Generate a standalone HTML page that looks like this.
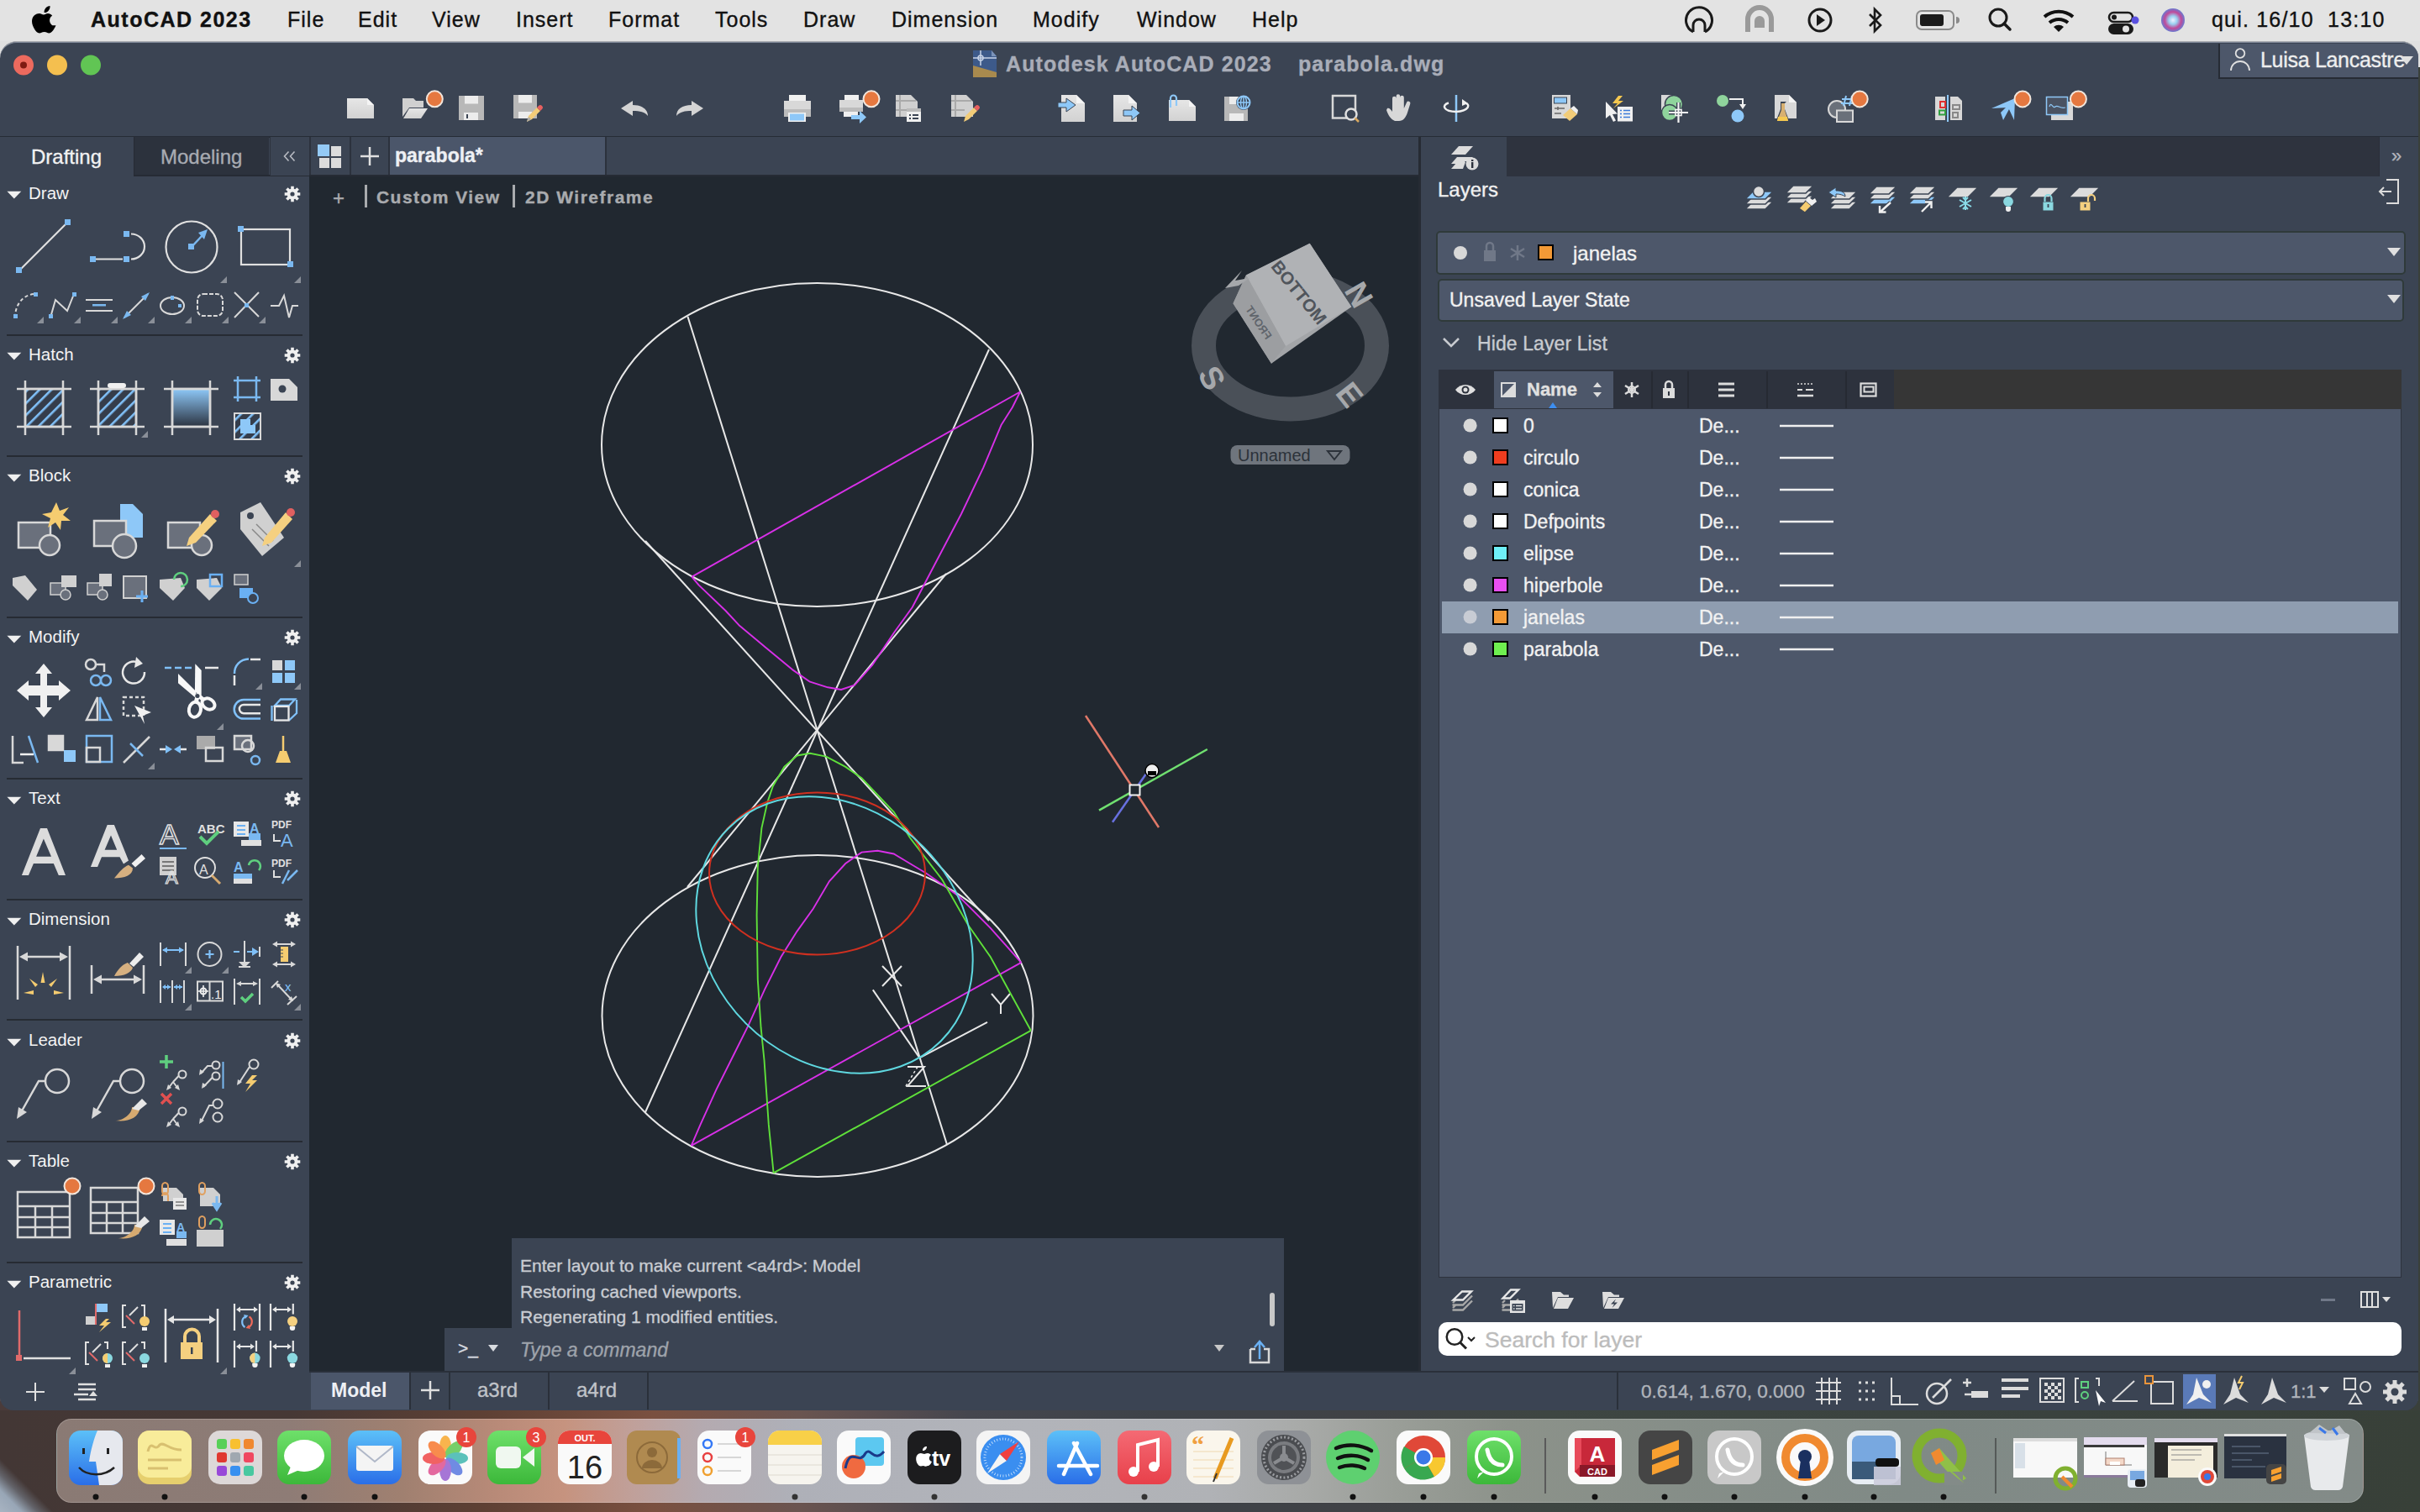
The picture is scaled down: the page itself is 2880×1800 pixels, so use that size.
<!DOCTYPE html>
<html><head><meta charset="utf-8">
<style>
*{margin:0;padding:0;box-sizing:border-box}
html,body{width:2880px;height:1800px;overflow:hidden}
body{position:relative;font-family:"Liberation Sans",sans-serif;background:#3f3a38}
.a{position:absolute}
.t{position:absolute;white-space:nowrap;line-height:1;-webkit-text-stroke:0.35px currentColor}
svg{position:absolute;overflow:visible}
#wall{left:0;top:0;width:2880px;height:1800px;background:linear-gradient(90deg,#4a3b3a 0%,#4a3d3b 30%,#5a5a5a 50%,#3d433c 80%,#3a403a 100%)}
#menubar{left:0;top:0;width:2880px;height:49px;background:#e3e3e3}
#menubar .t{font-size:25px;color:#111;top:10.5px;letter-spacing:1px}
#win{left:0;top:49px;width:2878px;height:1630px;background:#3b4453;border-radius:20px 20px 16px 16px;border-top:1px solid #a6a8ae;box-shadow:inset 0 1px 0 #7f8898;overflow:hidden}
#canvas{left:368px;top:210px;width:1322px;height:1422px;background:#212830}
#rpanel{left:1690px;top:163px;width:1188px;height:1469px;background:#3b4453}
#lpal{left:0;top:163px;width:368px;height:1516px;background:#3b4453}
#dock{left:67px;top:1688px;width:2746px;height:99px;border-radius:18px;background:linear-gradient(90deg,#8a7b74 0%,#a08a80 40%,#9a9ea0 60%,#7f8580 100%)}
.hd{font-size:20px;color:#f0f0f0}
</style></head>
<body>
<div class="a" id="wall"></div>
<div class="a" style="left:0;top:0;width:2880px;height:80px;background:#e0e0e0"></div>
<div class="a" id="menubar">
  <svg style="left:40px;top:7px" width="28" height="32" viewBox="0 0 28 32"><path d="M19.5 0c.3 2.3-.6 4.3-1.8 5.7-1.3 1.5-3.2 2.5-5.1 2.3-.3-2.1.7-4.3 1.8-5.6C15.6 1 17.7.1 19.5 0zM26.5 23.3c-.8 1.8-1.2 2.6-2.2 4.2-1.4 2.2-3.4 4.9-5.9 4.9-2.2 0-2.7-1.4-5.7-1.4-3 0-3.6 1.4-5.8 1.4-2.5 0-4.4-2.5-5.8-4.7C-2.8 21.6-3.2 14.5 1.2 11c1.6-1.3 3.6-2 5.5-2 2.1 0 3.5 1.4 5.2 1.4 1.7 0 2.7-1.4 5.2-1.4 1.8 0 3.8 1 5.1 2.7-4.5 2.5-3.8 8.9.3 11.6z" fill="#000"/></svg>
  <div class="t" style="left:108px;font-weight:bold;letter-spacing:1.5px">AutoCAD 2023</div>
  <div class="t" style="left:342px">File</div>
  <div class="t" style="left:426px">Edit</div>
  <div class="t" style="left:514px">View</div>
  <div class="t" style="left:614px">Insert</div>
  <div class="t" style="left:724px">Format</div>
  <div class="t" style="left:851px">Tools</div>
  <div class="t" style="left:956px">Draw</div>
  <div class="t" style="left:1061px">Dimension</div>
  <div class="t" style="left:1229px">Modify</div>
  <div class="t" style="left:1353px">Window</div>
  <div class="t" style="left:1490px">Help</div>
  <!-- status icons -->
  <svg style="left:2000px;top:4px" width="620" height="40" viewBox="2000 4 620 40">
    <defs><radialGradient id="siri" cx="0.5" cy="0.5" r="0.5"><stop offset="0" stop-color="#f0f0ff"/><stop offset="0.35" stop-color="#9ad0f0"/><stop offset="0.7" stop-color="#c04a9a"/><stop offset="1" stop-color="#6a7ad0"/></radialGradient></defs>
    <path d="M2015 38 A15.5 15.5 0 1 1 2029 38" fill="none" stroke="#1a1a1a" stroke-width="3"/>
    <path d="M2015 38 V30 A6.5 6.5 0 0 1 2029 30 V38" fill="none" stroke="#1a1a1a" stroke-width="3"/>
    <path d="M2080 38 V23 A14 14 0 0 1 2108 23 V38" fill="none" stroke="#9a9a9a" stroke-width="6"/>
    <path d="M2088 33 V25 A6 6 0 0 1 2100 25 V33Z" fill="#9a9a9a"/>
    <circle cx="2166" cy="24" r="13" fill="none" stroke="#1a1a1a" stroke-width="3"/><path d="M2162 17 L2172 24 L2162 31Z" fill="#1a1a1a"/>
    <path d="M2225 17 L2238 30 L2231 37 V11 L2238 18 L2225 31" fill="none" stroke="#1a1a1a" stroke-width="2.6"/>
    <rect x="2281" y="13" width="44" height="22" rx="6" fill="none" stroke="#8a8a8a" stroke-width="2"/>
    <rect x="2285" y="17" width="28" height="14" rx="3" fill="#1a1a1a"/>
    <path d="M2328 20 a4 4 0 0 1 0 8Z" fill="#8a8a8a"/>
    <circle cx="2378" cy="21" r="10" fill="none" stroke="#1a1a1a" stroke-width="3"/><path d="M2385 28 L2392 35" stroke="#1a1a1a" stroke-width="3.5" stroke-linecap="round"/>
    <path d="M2433 20 a26 26 0 0 1 34 0" fill="none" stroke="#111" stroke-width="4"/><path d="M2439 27 a17 17 0 0 1 22 0" fill="none" stroke="#111" stroke-width="4"/><path d="M2444 32 a9 9 0 0 1 12 0 L2450 38Z" fill="#111"/>
    <rect x="2510" y="15" width="28" height="11" rx="5.5" fill="none" stroke="#1a1a1a" stroke-width="2.6"/><circle cx="2516" cy="20.5" r="3" fill="#1a1a1a"/>
    <rect x="2509" y="28" width="30" height="13" rx="6.5" fill="#1a1a1a"/><circle cx="2530" cy="34.5" r="4" fill="#e3e3e3"/>
    <circle cx="2541" cy="24" r="4.5" fill="#5a50e0"/>
    <circle cx="2586" cy="24" r="14" fill="url(#siri)"/>
  </svg>
  <div class="t" style="left:2632px;letter-spacing:1.2px">qui. 16/10&nbsp; 13:10</div>
</div>
<div class="a" id="win"></div>
<!-- traffic lights -->
<svg style="left:0;top:49px" width="140" height="60" viewBox="0 49 140 60">
  <circle cx="28" cy="77.5" r="12" fill="#ec6a5e"/><circle cx="28" cy="77.5" r="4" fill="#7e1a12"/>
  <circle cx="68" cy="77.5" r="12" fill="#f4bf4f"/>
  <circle cx="108" cy="77.5" r="12" fill="#61c554"/>
</svg>
<!-- title -->
<svg style="left:1158px;top:60px" width="29" height="32" viewBox="0 0 29 32">
  <path d="M0 0 H22 L28 7 V32 H0Z" fill="#3d5a8a"/><path d="M22 0 L28 7 H22Z" fill="#7c93b8"/>
  <path d="M0 18 L28 26 V32 H0Z" fill="#a88a4e"/>
  <path d="M9 0 V18 M0 9 H28" stroke="#c8d4e8" stroke-width="1.5"/><circle cx="9" cy="9" r="3" fill="none" stroke="#c8d4e8" stroke-width="1.5"/>
</svg>
<div class="t" style="left:1197px;top:64px;font-size:25px;font-weight:bold;color:#a9adb8;letter-spacing:1.1px">Autodesk AutoCAD 2023</div>
<div class="t" style="left:1545px;top:64px;font-size:25px;font-weight:bold;color:#a9adb8;letter-spacing:1.1px">parabola.dwg</div>
<!-- user -->
<div class="a" style="left:2640px;top:52px;width:238px;height:42px;background:#4d576a;border-left:2px solid #262b34;border-bottom:2px solid #262b34;border-top-right-radius:16px"></div>
<svg style="left:2650px;top:56px" width="32" height="32" viewBox="2650 56 32 32"><circle cx="2666" cy="63.5" r="5.3" fill="none" stroke="#e0e0e0" stroke-width="1.8"/><path d="M2655 84 a11 11 0 0 1 22 0" fill="none" stroke="#e0e0e0" stroke-width="1.8"/></svg>
<div class="t" style="left:2690px;top:59px;font-size:25px;color:#eeeeee;letter-spacing:-0.3px">Luisa Lancastre</div>
<svg style="left:2855px;top:66px" width="18" height="12" viewBox="0 0 18 12"><path d="M1 1 H17 L9 11Z" fill="#e0e0e0"/></svg>
<!-- toolbar icons -->
<svg style="left:0;top:100px" width="2880" height="60" viewBox="0 100 2880 60">
 <defs>
  <linearGradient id="pg" x1="0" y1="0" x2="0" y2="1"><stop offset="0" stop-color="#e6e6e6"/><stop offset="1" stop-color="#d2d2d2"/></linearGradient>
 </defs>
 <g fill="url(#pg)">
  <!-- new -->
  <path d="M413 117 H437 L445 125 V141 H413Z"/><path d="M437 117 V125 H445Z" fill="#f4f4f4"/>
  <!-- open -->
  <path d="M479 117 H492 L495 120 H504 V128 H487 L479 139Z" fill="#d0d0d0"/><path d="M487 129 H509 L501 141 H480Z"/>
  <!-- save -->
  <path d="M546 114 H576 V143 H546Z" fill="#b8b8b8"/><rect x="553" y="114" width="16" height="9.5" fill="#ececec"/><rect x="552" y="134" width="17" height="9" fill="#ececec"/><rect x="555" y="136" width="2" height="5" fill="#3b4453"/>
  <!-- save as -->
  <path d="M611 113 H639 V141 H611Z" fill="#b8b8b8"/><rect x="617" y="113" width="16" height="9.5" fill="#ececec"/><rect x="617" y="133" width="16" height="8" fill="#ececec"/>
  <path d="M627 145 L629 138 L639 128 L643 132 L633 142Z" fill="#f2cc78"/><path d="M639 128 L641 126 a2.5 2.5 0 0 1 4 4 L643 132Z" fill="#e86060"/><path d="M627 145 L629 139 L632 142Z" fill="#aaa"/>
  <!-- undo/redo -->
  <path d="M739 129 L753 120 V125 C764 125 771 130 771 138 C767 133 761 132 753 132 V138Z" fill="#d4d4d4"/>
  <path d="M837 129 L823 120 V125 C812 125 805 130 805 138 C809 133 815 132 823 132 V138Z" fill="#d4d4d4"/>
  <!-- plot -->
  <rect x="939" y="113" width="20" height="7" fill="#f0f0f0"/><path d="M933 120 H965 V139 H933Z" fill="#d8d8d8"/><rect x="933" y="130" width="32" height="9" fill="#bcbcbc"/><rect x="938" y="134" width="21" height="11" fill="#f0f0f0"/><rect x="940" y="135.5" width="17" height="8" fill="#8ec8f8"/>
  <!-- batch plot -->
  <rect x="1005" y="113" width="17" height="6" fill="#f0f0f0"/><path d="M999 119 H1027 V133 H999Z" fill="#d8d8d8"/><rect x="999" y="128" width="28" height="5" fill="#bcbcbc"/><rect x="1004" y="133" width="17" height="6" fill="#f0f0f0"/>
  <path d="M1013 137 H1023 V132 L1031 139.5 L1023 147 V142 H1013Z" fill="#8ec8f8"/>
  <!-- sheet set -->
  <path d="M1066 113 H1084 L1092 121 V139 H1066Z" fill="#d0d0d0"/><path d="M1071 113 V139 M1066 120 H1090 M1066 131 H1082" stroke="#aaa" stroke-width="2"/>
  <rect x="1079" y="129" width="17" height="16" fill="#f0f0f0"/><rect x="1079" y="129" width="17" height="4" fill="#bbb"/><path d="M1082 137 H1084 M1086 137 H1093 M1082 141 H1084 M1086 141 H1093" stroke="#3b4453" stroke-width="1.8"/>
  <!-- sheet edit -->
  <path d="M1132 113 H1150 L1158 121 V139 H1132Z" fill="#d0d0d0"/><path d="M1137 113 V139 M1132 120 H1156 M1132 131 H1148" stroke="#aaa" stroke-width="2"/>
  <path d="M1147 145 L1149 138 L1159 128 L1163 132 L1153 142Z" fill="#f2cc78"/><path d="M1159 128 L1161 126 a2.5 2.5 0 0 1 4 4 L1163 132Z" fill="#e86060"/>
  <!-- import -->
  <path d="M1263 113 H1281 L1291 123 V145 H1263Z"/><path d="M1281 113 V123 H1291Z" fill="#f4f4f4"/><path d="M1259 122 H1269 V117 L1280 125 L1269 133 V128 H1259Z" fill="#8ec8f8" stroke="#3b4453" stroke-width="1"/>
  <!-- export -->
  <path d="M1325 113 H1343 L1353 123 V145 H1325Z"/><path d="M1343 113 V123 H1353Z" fill="#f4f4f4"/><path d="M1337 131 H1347 V126 L1357 134.5 L1347 143 V138 H1337Z" fill="#8ec8f8" stroke="#3b4453" stroke-width="1"/>
  <!-- attach -->
  <path d="M1391 119 H1415 L1423 127 V144 H1391Z"/><path d="M1415 119 V127 H1423Z" fill="#f4f4f4"/><path d="M1393 128 V117 a3.5 3.5 0 0 1 7 0 V126" fill="none" stroke="#8ec8f8" stroke-width="2.2"/>
  <!-- save web -->
  <path d="M1457 115 H1485 V144 H1457Z" fill="#b8b8b8"/><rect x="1463" y="115" width="12" height="9" fill="#ececec"/><rect x="1463" y="135" width="17" height="9" fill="#ececec"/>
  <circle cx="1480" cy="122" r="9" fill="#3b4453"/><circle cx="1480" cy="122" r="7.5" fill="none" stroke="#8ec8f8" stroke-width="2"/><path d="M1472.5 122 H1487.5 M1480 114.5 V129.5" stroke="#8ec8f8" stroke-width="1.5"/><ellipse cx="1480" cy="122" rx="3.5" ry="7.5" fill="none" stroke="#8ec8f8" stroke-width="1.5"/>
 </g>
 <!-- zoom window -->
 <rect x="1586" y="114" width="27" height="26.5" fill="none" stroke="#d8d8d8" stroke-width="2.5"/><circle cx="1608" cy="136" r="6.5" fill="#3b4453" stroke="#e0e0e0" stroke-width="2.5"/><path d="M1612.5 140.5 L1617 145" stroke="#d8a860" stroke-width="2.5"/>
 <!-- pan -->
 <path d="M1660 144 C1655 142 1652 137 1650 131 L1651 129 C1653 128 1655 130 1657 133 V117 a2.3 2.3 0 0 1 4.6 0 V128 V114.5 a2.3 2.3 0 0 1 4.6 0 V128 V116 a2.3 2.3 0 0 1 4.6 0 V129 L1674 122 a2.3 2.3 0 0 1 4.3 1.6 L1675 134 C1673 140 1670 144 1665 144Z" fill="#d8d8d8"/>
 <!-- orbit -->
 <path d="M1733 113 V145" stroke="#8ec8f8" stroke-width="2.5"/>
 <path d="M1743 122.5 C1751 124 1748 132 1733 133 C1718 133 1715 125 1724 122.5" fill="none" stroke="#f0f0f0" stroke-width="2.5"/><path d="M1740 118 L1747 123 L1740 126Z" fill="#f0f0f0"/>
 <!-- properties -->
 <rect x="1847" y="113" width="22" height="28" fill="#d8d8d8"/><rect x="1849.5" y="116" width="15" height="7" fill="#8ec8f8" stroke="#3b4453" stroke-width="1"/><path d="M1850 129 H1862 M1850 135 H1858 M1854 127 V131" stroke="#666" stroke-width="1.5"/>
 <path d="M1860 137 L1869 129 L1877 136 L1868 144Z" fill="#f2cc78"/><path d="M1869 129 L1873 126 L1878 131 L1877 136Z" fill="#f0f0f0"/>
 <!-- quick select -->
 <path d="M1911 121 L1911 141 L1916 137 L1920 145 L1923 143.5 L1919 136 L1925 135.5Z" fill="#f0f0f0"/>
 <path d="M1926 114 L1919 123 H1925 L1920 129 L1932 120 H1926 L1931 114Z" fill="#f5c850"/>
 <rect x="1925" y="127" width="18" height="17.5" fill="#f0f0f0"/><path d="M1928 131.5 H1930 M1932 131.5 H1940 M1928 135.5 H1930 M1932 135.5 H1940 M1928 139.5 H1930 M1932 139.5 H1940" stroke="#3a7ad8" stroke-width="1.6"/>
 <!-- match props -->
 <rect x="1977" y="113" width="18" height="18" fill="#d8d8d8"/><circle cx="1992" cy="124" r="10.5" fill="#8fd49c" stroke="#3b4453" stroke-width="1.5"/><circle cx="1987" cy="134" r="9.5" fill="#8fd49c" stroke="#3b4453" stroke-width="1.5"/>
 <path d="M1997.5 122 V146 M1986 134 H2009" stroke="#3b4453" stroke-width="5"/><path d="M1997.5 122 V146 M1986 134 H2009" stroke="#f4f4f4" stroke-width="2.2"/><rect x="1994" y="130.5" width="7" height="7" fill="none" stroke="#f4f4f4" stroke-width="1.6"/>
 <!-- layer tool -->
 <circle cx="2050" cy="120" r="7" fill="#8fd49c"/><path d="M2058 118 H2074 V126" fill="none" stroke="#f0f0f0" stroke-width="2"/><path d="M2070 124 L2074 130 L2078 124Z" fill="#f0f0f0"/><circle cx="2068" cy="138" r="7.5" fill="#8ec8f8"/>
 <!-- design center-ish -->
 <path d="M2112 113 H2129 L2138 122 V141 H2112Z" fill="#d8d8d8"/><path d="M2129 113 V122 H2138Z" fill="#f4f4f4"/><path d="M2119 121 H2126 L2124 123 V130 L2129 143 H2114 L2119 130 V123Z" fill="#3b4453"/><path d="M2120 123 H2124 V131 L2128 144 H2115 L2120 131Z" fill="#d8b070"/><path d="M2116 139 H2127 L2128 144 H2115Z" fill="#f5c850"/>
 <!-- count -->
 <circle cx="2186" cy="130" r="10" fill="#6a707a" stroke="#d8d8d8" stroke-width="2"/><rect x="2186" y="131.5" width="19" height="13.5" fill="#6a707a" stroke="#d8d8d8" stroke-width="2"/>
 <path d="M2194 126 L2197 114 M2201 126 L2204 114 M2192 118 H2207 M2191 123 H2206" stroke="#8ec8f8" stroke-width="2"/>
 <!-- compare -->
 <rect x="2303" y="115" width="12" height="28" fill="#d8d8d8"/><path d="M2321 115 H2330 L2335 120 V143 H2321Z" fill="#d8d8d8"/>
 <rect x="2309" y="121" width="6" height="7" fill="none" stroke="#e03030" stroke-width="2"/><rect x="2308" y="131.5" width="7" height="5" fill="none" stroke="#30a040" stroke-width="2"/>
 <rect x="2324" y="125" width="8" height="5" fill="none" stroke="#888" stroke-width="2"/><rect x="2324" y="134" width="6" height="6" fill="none" stroke="#888" stroke-width="2"/>
 <path d="M2318 113 V145" stroke="#8ec8f8" stroke-width="2"/>
 <!-- share -->
 <path d="M2370 129 L2398 117 L2390 128Z" fill="#8ec8f8"/><path d="M2381 134 L2398 117 L2384 143Z" fill="#8ec8f8"/><path d="M2390 128 L2398 117 L2397 143Z" fill="#8ec8f8"/>
 <!-- monitor -->
 <rect x="2441" y="121" width="26" height="22" fill="#d8d8d8"/><rect x="2435.5" y="115.5" width="25" height="21" fill="#4a5262" stroke="#8ec8f8" stroke-width="1.5"/><path d="M2439 127 C2441 120 2443 130 2446 127 C2449 124 2451 130 2458 128" fill="none" stroke="#8ec8f8" stroke-width="1.3"/>
 <g fill="#e57840" stroke="#f2e6dc" stroke-width="2">
  <circle cx="517.3" cy="117.8" r="9.5"/><circle cx="1037" cy="117.8" r="9.5"/><circle cx="2213.2" cy="117.9" r="9.5"/><circle cx="2407" cy="117.9" r="9.5"/><circle cx="2473.4" cy="117.9" r="9.5"/>
 </g>
</svg>
<!-- toolbar bottom line -->
<div class="a" style="left:0;top:162px;width:2878px;height:2px;background:#262c36"></div>
<!-- tab row -->
<div class="a" style="left:0;top:163px;width:159px;height:46px;background:#3b4453"></div>
<div class="t" style="left:37px;top:175px;font-size:24px;color:#f2f2f2">Drafting</div>
<div class="a" style="left:159px;top:163px;width:161px;height:45px;background:#2c323d;border-left:1px solid #262b34"></div><div class="a" style="left:159px;top:208px;width:1531px;height:2px;background:#262b34"></div>
<div class="t" style="left:191px;top:175px;font-size:24px;color:#a8abb2">Modeling</div>
<div class="a" style="left:321px;top:163px;width:47px;height:46px;background:#3b4453;border-left:1px solid #2c323d"></div>
<svg style="left:336px;top:179px" width="18" height="14" viewBox="0 0 18 14"><path d="M7.5 1.5 L2.5 7 L7.5 12.5 M14.5 1.5 L9.5 7 L14.5 12.5" fill="none" stroke="#b8bbc2" stroke-width="1.6"/></svg>
<div class="a" style="left:368px;top:163px;width:1322px;height:45px;background:#3b4453"></div>
<div class="a" style="left:368px;top:163px;width:2px;height:45px;background:#2c323d"></div>
<svg style="left:378px;top:172px" width="30" height="30" viewBox="0 0 30 30"><rect x="0" y="0" width="14" height="14" fill="#94caf6"/><rect x="16" y="2" width="12" height="12" fill="#dcdcdc"/><rect x="2" y="16" width="12" height="12" fill="#dcdcdc"/><rect x="16" y="16" width="12" height="12" fill="#dcdcdc"/></svg>
<div class="a" style="left:416px;top:163px;width:2px;height:45px;background:#2c323d"></div>
<svg style="left:428px;top:174px" width="24" height="24" viewBox="0 0 24 24"><path d="M12 1 V23 M1 12 H23" stroke="#e0e0e0" stroke-width="2.5"/></svg>
<div class="a" style="left:462px;top:163px;width:2px;height:45px;background:#2c323d"></div>
<div class="a" style="left:464px;top:163px;width:256px;height:45px;background:#4b566a"></div>
<div class="a" style="left:720px;top:163px;width:2px;height:45px;background:#2c323d"></div>
<div class="t" style="left:470px;top:174px;font-size:23px;font-weight:bold;color:#eef0f4">parabola*</div>
<div class="a" id="canvas"></div>

<div class="t" style="left:396px;top:224px;font-size:24px;color:#a9abae">+</div>
<div class="a" style="left:434px;top:220px;width:3px;height:27px;background:#a9abae"></div>
<div class="t" style="left:448px;top:224px;font-size:21px;font-weight:bold;color:#a9abae;letter-spacing:1.45px">Custom View</div>
<div class="a" style="left:610px;top:220px;width:3px;height:27px;background:#a9abae"></div>
<div class="t" style="left:625px;top:224px;font-size:21px;font-weight:bold;color:#a9abae;letter-spacing:1.5px">2D Wireframe</div>
<svg style="left:368px;top:208px" width="1322" height="1424" viewBox="368 208 1322 1424">
 <g fill="none" stroke-width="2">
  <g stroke="#e8e8e8">
   <ellipse cx="972.5" cy="529.5" rx="256.5" ry="192.5"/>
   <ellipse cx="973" cy="1209.5" rx="256.5" ry="191.5"/>
   <path d="M818.5 377 L1127 1362.6"/>
   <path d="M1177 416 L768 1324"/>
   <path d="M768 644 L1177 1096"/>
   <path d="M1126 683 L818 1056"/>
   <path d="M1094.4 1259.4 L1038.8 1178.4 M1094.4 1259.4 L1175 1216.8"/>
   <path d="M1050 1150 L1073 1174 M1073 1150 L1050 1174" stroke-width="2"/>
   <path d="M1180 1183 L1191 1196 L1202 1183 M1191 1196 V1207" stroke-width="2"/>
   <path d="M1080 1270 H1100 L1080 1293 H1102" stroke-width="2"/>
   <path d="M1078 1293 L1092 1270" stroke-width="1.5" stroke-dasharray="3 3"/>
  </g>
  <g stroke="#d830e8" stroke-width="1.9">
   <path d="M823.3 686.6 L1214 466.5"/>
   <path d="M823.3 686.6 L831.7 696.6 L863.5 727 L879.4 744.2 L911.1 770.7 L942.9 797.1 L964 811.7 L985.2 818.3 L1001 821 L1017 815.7 L1038 791.9 L1064.6 752.2 L1085.7 723 L1112 672.8 L1143.9 612 L1170.4 556.4 L1191.5 506.1 L1204.8 485 L1214 466.5" stroke-linejoin="round"/>
   <path d="M822.7 1363.8 L1215.3 1145.8"/>
   <path d="M822.7 1363.8 L833.5 1338.9 L852.7 1296.6 L871.9 1258.3 L891 1219.9 L910.2 1177.7 L929.4 1139.3 L948.6 1108.6 L967.8 1081.7 L987 1049.1 L1006.2 1028 L1025.4 1014.6 L1044.5 1012.7 L1063.7 1016.5 L1082.9 1028 L1102.1 1039.5 L1140.5 1066.4 L1178.8 1104.8 L1215.3 1145.8"/>
  </g>
  <g stroke="#5fe03a" stroke-width="1.9">
   <path d="M920.6 1396.4 L1226.8 1226.8"/>
   <path d="M920.6 1396.4 L914.8 1338.9 L909.5 1262 L905.6 1223.7 L901.8 1166.2 L900.6 1089.4 L901.8 1031.9 L906.4 985.8 L913.3 955.1 L919.8 936 L933.3 912.9 L948.6 899.5 L964 896.8 L983.1 900.6 L1006.2 912.9 L1025.4 926.3 L1063.7 966.6 L1082.9 997.3 L1121.3 1047.2 L1152 1101 L1178.8 1139.3 L1201.9 1181.5 L1226.8 1226.8"/>
  </g>
  <ellipse cx="972.5" cy="1040" rx="128.5" ry="96.5" stroke="#d03020"/>
  <ellipse cx="993" cy="1113" rx="179" ry="149" transform="rotate(45 993 1113)" stroke="#5fd8e0"/>
  <!-- cursor -->
  <path d="M1292 852 L1379 985" stroke="#e07868" stroke-width="2.5"/>
  <path d="M1308 964.6 L1436.8 892" stroke="#70e070" stroke-width="2.5"/>
  <path d="M1324 978.7 L1363.6 921.8" stroke="#6870e0" stroke-width="2.5"/>
  <rect x="1344.5" y="934.5" width="12" height="12" fill="#212830" stroke="#f0f0f0" stroke-width="2"/>
  <circle cx="1371" cy="917.6" r="8" fill="#f0f0f0" stroke="#000" stroke-width="1.5"/>
  <rect x="1366" y="918" width="10" height="5" fill="#000" stroke="none"/>
 </g>
 <!-- viewcube -->
 <ellipse cx="1535.5" cy="411.5" rx="103" ry="75.5" fill="none" stroke="#4a5058" stroke-width="29"/>
 <path d="M1558.7 289.8 L1608.3 365.2 L1513 432.7 L1467.5 361.3 L1483 327.5Z" fill="#a3a5a8"/>
 <path d="M1483 327.5 L1558.7 289.8 L1608.3 365.2 L1530 412Z" fill="#b0b2b5"/>
 <path d="M1467.5 361.3 L1483 327.5 L1530 412 L1513 432.7Z" fill="#9c9ea1"/>
 <text transform="translate(1546 348) rotate(51)" text-anchor="middle" dominant-baseline="central" font-family="Liberation Sans" font-weight="bold" font-size="21" fill="#50555c">BOTTOM</text>
 <text transform="translate(1498 384) rotate(56) scale(-1 1)" text-anchor="middle" dominant-baseline="central" font-family="Liberation Sans" font-weight="bold" font-size="13" fill="#60656c">FRONT</text>
 <g font-family="Liberation Sans" font-weight="bold" font-size="38" fill="#a6a8ab" text-anchor="middle" dominant-baseline="central">
  <text transform="translate(1617 351) rotate(60)">N</text>
  <text transform="translate(1442 450) rotate(60)">S</text>
  <text transform="translate(1606 470) rotate(52)">E</text>
 </g>
 <path d="M1458 343 L1478 322 L1470 334 L1487 331 L1474 340Z" fill="#a6a8ab"/>
 <rect x="1464.5" y="530" width="142" height="23" rx="8" fill="#6f757d"/>
 <text x="1473" y="549" font-family="Liberation Sans" font-size="20" fill="#2c323a">Unnamed</text>
 <path d="M1580 537 H1596 L1588 547Z" fill="none" stroke="#2c323a" stroke-width="2"/>
</svg>
<!-- command line -->
<div class="a" style="left:609px;top:1474px;width:919px;height:107px;background:#3b4453"></div>
<div class="t" style="left:619px;top:1496px;font-size:21px;color:#c9ccd2">Enter layout to make current &lt;a4rd&gt;: Model</div>
<div class="t" style="left:619px;top:1527px;font-size:21px;color:#c9ccd2">Restoring cached viewports.</div>
<div class="t" style="left:619px;top:1557px;font-size:21px;color:#c9ccd2">Regenerating 1 modified entities.</div>
<div class="a" style="left:1511px;top:1539px;width:6px;height:40px;border-radius:3px;background:#c8c8c8"></div>
<div class="a" style="left:529px;top:1581px;width:999px;height:51px;background:#3b4453"></div>
<div class="t" style="left:545px;top:1594px;font-size:21px;color:#d8dbe0">&gt;_</div>
<svg style="left:580px;top:1600px" width="14" height="10" viewBox="0 0 14 10"><path d="M1 1 H13 L7 9Z" fill="#d8dbe0"/></svg>
<div class="t" style="left:619px;top:1596px;font-size:23px;font-style:italic;color:#9ea3ab">Type a command</div>
<svg style="left:1444px;top:1600px" width="14" height="10" viewBox="0 0 14 10"><path d="M1 1 H13 L7 9Z" fill="#c8c8c8"/></svg>
<svg style="left:1484px;top:1594px" width="30" height="30" viewBox="0 0 30 30"><path d="M4 12 H10 M20 12 H26 V28 H4 V12" fill="none" stroke="#d8d8d8" stroke-width="2.5"/><path d="M15 24 V4 M9 10 L15 3 L21 10" fill="none" stroke="#6ab0f3" stroke-width="2.5"/></svg>

<svg style="left:0;top:208px" width="368" height="1470" viewBox="0 208 368 1470">
 <defs>
  <g id="gear"><circle r="6.5" fill="#f0f0f0"/><g stroke="#f0f0f0" stroke-width="3.6"><path d="M0 -9.3 V9.3 M-9.3 0 H9.3 M-6.6 -6.6 L6.6 6.6 M-6.6 6.6 L6.6 -6.6"/></g><circle r="2.6" fill="#3b4453"/></g>
  <path id="tri" d="M0.4 2.8 H17.3 L8.8 11.5Z" fill="#f0f0f0"/>
  <path id="dd" d="M0 8 L8 0 V8Z" fill="#8a8f98"/>
  <pattern id="hatch" width="10" height="10" patternUnits="userSpaceOnUse" patternTransform="rotate(-45)"><rect width="10" height="10" fill="#353d4b"/><rect width="10" height="2.6" fill="#80c0f8"/></pattern>
  <linearGradient id="grad" x1="0" y1="0" x2="0" y2="1"><stop offset="0" stop-color="#8ec8f8"/><stop offset="1" stop-color="#2b3340"/></linearGradient>
 </defs>
 <!-- separators -->
 <g fill="#262b33">
  <rect x="8" y="398" width="352" height="2"/><rect x="8" y="542" width="352" height="2"/><rect x="8" y="734" width="352" height="2"/>
  <rect x="8" y="926" width="352" height="2"/><rect x="8" y="1070" width="352" height="2"/><rect x="8" y="1213" width="352" height="2"/>
  <rect x="8" y="1358" width="352" height="2"/><rect x="8" y="1502" width="352" height="2"/>
 </g>
 <!-- headers -->
 <g>
  <use href="#tri" x="8" y="225"/><use href="#gear" x="348" y="231"/>
  <use href="#tri" x="8" y="417"/><use href="#gear" x="348" y="423"/>
  <use href="#tri" x="8" y="562"/><use href="#gear" x="348" y="567"/>
  <use href="#tri" x="8" y="754"/><use href="#gear" x="348" y="759"/>
  <use href="#tri" x="8" y="946"/><use href="#gear" x="348" y="951"/>
  <use href="#tri" x="8" y="1090"/><use href="#gear" x="348" y="1095"/>
  <use href="#tri" x="8" y="1234"/><use href="#gear" x="348" y="1239"/>
  <use href="#tri" x="8" y="1378"/><use href="#gear" x="348" y="1383"/>
  <use href="#tri" x="8" y="1522"/><use href="#gear" x="348" y="1527"/>
 </g>
 <g font-family="Liberation Sans" font-size="20.5" fill="#f4f4f4" transform="translate(0 -1.2)">
  <text x="34" y="238">Draw</text><text x="34" y="430">Hatch</text><text x="34" y="574">Block</text>
  <text x="34" y="766">Modify</text><text x="34" y="958">Text</text><text x="34" y="1102">Dimension</text>
  <text x="34" y="1246">Leader</text><text x="34" y="1390">Table</text><text x="34" y="1534">Parametric</text>
 </g>
 <!-- DRAW -->
 <g fill="none" stroke="#e0e0e0" stroke-width="2.2">
  <path d="M23 322 L80 265"/>
  <path d="M114 308.5 H146 M156 278.5 a16 15 0 0 1 0 30"/>
  <circle cx="228" cy="294" r="30.5"/>
  <rect x="287" y="273" width="58" height="42"/>
 </g>
 <g fill="#7ab8f0">
  <rect x="19" y="318" width="7" height="7"/><rect x="77" y="261" width="7" height="7"/>
  <rect x="107" y="305" width="7" height="7"/><rect x="147" y="305" width="7" height="7"/><rect x="147" y="275" width="7" height="7"/>
  <rect x="224" y="290" width="7" height="7"/><path d="M228 294 L241 280" stroke="#7ab8f0" stroke-width="2.5"/><path d="M247 273 L236 277 L243 285Z"/>
  <rect x="283" y="269" width="7" height="7"/><rect x="342" y="311" width="7" height="7"/>
 </g>
 <use href="#dd" x="262" y="329"/><use href="#dd" x="350" y="329"/>
 <g fill="none" stroke="#d8d8d8" stroke-width="2">
  <path d="M18 378 C18 360 30 350 42 350" stroke-dasharray="4 3"/>
  <path d="M60 378 L66 357 L80 370 L88 350" />
  <path d="M102 357 H134 M102 370 H134"/>
  <path d="M148 378 L176 350"/>
  <ellipse cx="205" cy="364" rx="14" ry="10"/>
  <rect x="235" y="350" width="30" height="26" rx="7" stroke-dasharray="5 2"/>
  <path d="M279 348 L308 377 M279 378 L308 348" />
  <path d="M322 364 H332 L338 352 L344 378 L348 364 H355"/>
 </g>
 <g fill="#7ab8f0"><rect x="16" y="374" width="5" height="5"/><rect x="40" y="348" width="5" height="5"/><rect x="58" y="374" width="5" height="5"/><rect x="86" y="348" width="5" height="5"/><rect x="110" y="362" width="16" height="2.5"/><path d="M146 380 L156 375 L151 370Z M178 348 L168 353 L173 358Z"/><rect x="203" y="352" width="4" height="5"/><rect x="212" y="362" width="4" height="4"/><rect x="291" y="361" width="5" height="5"/></g>
 <g><use href="#dd" x="44" y="377"/><use href="#dd" x="88" y="377"/><use href="#dd" x="132" y="377"/><use href="#dd" x="176" y="377"/><use href="#dd" x="220" y="377"/><use href="#dd" x="264" y="377"/><use href="#dd" x="308" y="377"/></g>
 <!-- HATCH -->
 <g stroke="#d8d8d8" stroke-width="2.5" fill="none">
  <rect x="30" y="463" width="45" height="45" fill="url(#hatch)"/><path d="M20 463 H85 M20 508 H85 M30 453 V518 M75 453 V518"/>
  <rect x="117" y="463" width="45" height="45" fill="url(#hatch)"/><path d="M107 463 H172 M107 508 H172 M117 453 V518 M162 453 V518"/>
  <rect x="205" y="463" width="45" height="45" fill="url(#grad)"/><path d="M195 463 H260 M195 508 H260 M205 453 V518 M250 453 V518"/>
 </g>
 <rect x="128" y="456" width="22" height="6" rx="3" fill="#f0f0f0"/>
 <use href="#dd" x="168" y="513"/>
 <path d="M278 453 H310 M278 473 H310 M283 448 V478 M305 448 V478" stroke="#7ab8f0" stroke-width="2.5"/>
 <path d="M322 451 H344 L354 461 V477 H322Z" fill="#d8d8d8"/><circle cx="336" cy="463" r="4.5" fill="#3b4453"/>
 <rect x="279" y="492" width="31" height="31" fill="url(#hatch)" stroke="#d8d8d8" stroke-width="2"/><path d="M286 499 H298 V506 H304 V516 H286Z" fill="#8ec8f8"/>
 <!-- BLOCK -->
 <g fill="#6a707c" stroke="#d8d8d8" stroke-width="2.5">
  <rect x="22" y="622" width="38" height="30"/><circle cx="59" cy="649" r="12"/>
  <path d="M143 600 H158 L170 612 V640 H143Z" fill="#8ec8f8" stroke="none"/>
  <rect x="112" y="620" width="38" height="30"/><circle cx="148" cy="650" r="14"/>
  <rect x="200" y="622" width="38" height="30"/><circle cx="240" cy="649" r="12"/>
 </g>
 <path d="M67 598 L71 608 L82 604 L75 613 L84 620 L73 620 L72 631 L66 622 L57 628 L60 617 L50 612 L61 610Z" fill="#f5cc70"/>
 <path d="M225 640 L250 612 L258 620 L233 646 L222 650Z" fill="#f5d080"/><circle cx="256" cy="612" r="5" fill="#e06060"/>
 <path d="M286 610 L310 598 L338 640 L312 662 L286 630Z" fill="#d0d0d0"/><circle cx="298" cy="614" r="4" fill="#3b4453"/><path d="M300 630 L320 650 M305 624 L325 644" stroke="#888" stroke-width="1.5"/>
 <path d="M315 640 L340 610 L348 618 L323 646 L312 650Z" fill="#f5d080"/><circle cx="346" cy="610" r="5" fill="#e06060"/>
 <use href="#dd" x="350" y="667"/>
 <g fill="#d0d0d0">
  <path d="M15 688 L30 685 L44 702 L33 715 L15 697Z"/>
  <rect x="60" y="694" width="18" height="14" fill="#6a707c" stroke="#d0d0d0" stroke-width="1.5"/><rect x="73" y="685" width="18" height="14"/><circle cx="78" cy="708" r="6" fill="#6a707c" stroke="#d0d0d0" stroke-width="1.5"/>
  <rect x="104" y="694" width="18" height="14" fill="#6a707c" stroke="#d0d0d0" stroke-width="1.5"/><rect x="118" y="683" width="15" height="15"/><circle cx="122" cy="708" r="6" fill="#6a707c" stroke="#d0d0d0" stroke-width="1.5"/>
  <rect x="147" y="686" width="27" height="26" fill="#6a707c" stroke="#d0d0d0" stroke-width="2"/><path d="M169 703 V717 M162 710 H176" stroke="#6ab0f3" stroke-width="3"/>
  <path d="M190 690 L215 688 L220 700 L206 715 L190 700Z"/><path d="M207 690 a8 8 0 1 1 8 8" stroke="#5fcf7f" stroke-width="2.5" fill="none"/>
  <path d="M234 690 L258 688 L264 700 L249 715 L234 700Z"/><rect x="250" y="684" width="14" height="14" fill="none" stroke="#6ab0f3" stroke-width="2.5"/>
  <rect x="279" y="684" width="16" height="12" fill="#6a707c" stroke="#d0d0d0" stroke-width="1.5"/><rect x="285" y="700" width="16" height="12" fill="#6ab0f3"/><circle cx="301" cy="712" r="6" fill="#3b4453" stroke="#6ab0f3" stroke-width="2"/>
 </g>
 <!-- MODIFY -->
 <path d="M52 790 L62 802 H56 V816 H70 V810 L84 822 L70 834 V828 H56 V842 H62 L52 854 L42 842 H48 V828 H34 V834 L20 822 L34 810 V816 H48 V802 H42Z" fill="#f0f0f0"/>
 <g fill="none" stroke="#d8d8d8" stroke-width="2.5">
  <circle cx="108" cy="791" r="6"/><path d="M114 791 H124 V800"/>
 </g>
 <g fill="none" stroke="#7ab8f0" stroke-width="2.5"><circle cx="114" cy="810" r="6"/><circle cx="126" cy="810" r="6"/></g>
 <path d="M172 800 a13 13 0 1 1 -7 -11" fill="none" stroke="#e8e8e8" stroke-width="2.5"/><path d="M162 782 L170 790 L160 795Z" fill="#e8e8e8"/>
 <path d="M196 795 H228" stroke="#80c0f8" stroke-width="2.5" stroke-dasharray="8 4"/><path d="M244 795 H260" stroke="#e8e8e8" stroke-width="2.5"/>
 <path d="M232.3 790.2 L239.7 798 V828 L231.9 823.5Z" fill="#f8f8f8"/>
 <path d="M212 802 V813.3 L231.9 830 L233.7 823.5Z" fill="#f8f8f8"/>
 <ellipse cx="231.9" cy="844.8" rx="7" ry="9" transform="rotate(12 231.9 844.8)" fill="none" stroke="#f8f8f8" stroke-width="4"/>
 <ellipse cx="248" cy="838" rx="8" ry="6" transform="rotate(32 248 838)" fill="none" stroke="#f8f8f8" stroke-width="4"/>
 <path d="M236 826 L233 836.5 M234 826 L243 834" stroke="#f8f8f8" stroke-width="5"/>
 <circle cx="235" cy="828.6" r="2.5" fill="#3b4453"/>
 <use href="#dd" x="258" y="861"/>
 <path d="M279 802 C279 792 286 785 296 784.6" fill="none" stroke="#80c0f8" stroke-width="2.5"/><path d="M298 785 H310 M279 804 V816" stroke="#e8e8e8" stroke-width="2.5"/>
 <use href="#dd" x="304" y="813"/>
 <g fill="#8ec8f8"><rect x="324" y="786" width="12" height="12" fill="#d8d8d8"/><rect x="339" y="786" width="12" height="12"/><rect x="324" y="801" width="12" height="12"/><rect x="339" y="801" width="12" height="12"/></g>
 <use href="#dd" x="350" y="813"/>
 <path d="M103 857 L116 830 V857Z" fill="none" stroke="#d8d8d8" stroke-width="2.5"/><path d="M119 830 L132 857 H119Z" fill="none" stroke="#7ab8f0" stroke-width="2.5"/>
 <rect x="147" y="830" width="24" height="22" fill="none" stroke="#d8d8d8" stroke-width="2.5" stroke-dasharray="4 3"/><path d="M160 840 L180 848 L170 852 L172 862Z" fill="#f0f0f0"/>
 <path d="M310 833 H290 a11.3 11.3 0 0 0 0 22.6 H310" fill="none" stroke="#80c0f8" stroke-width="2.5"/><path d="M310 839 H290 a5.1 5.1 0 0 0 0 10.2 H310" fill="none" stroke="#e8e8e8" stroke-width="2.5"/>
 <path d="M327 840 L334 832.5 H351 L344 840Z M344 857.5 L353 849 V833" fill="none" stroke="#80c0f8" stroke-width="2.3"/><path d="M323.5 840 V858" stroke="#80c0f8" stroke-width="2.3"/><rect x="327" y="841" width="16.5" height="16.5" fill="none" stroke="#e8e8e8" stroke-width="2.3"/>
 <g fill="none" stroke="#d8d8d8" stroke-width="2.5">
  <path d="M15 876 V908 H28"/><path d="M34 876 L45 908" stroke="#7ab8f0"/><path d="M24 898 H40" stroke="#f0f0f0"/>
  <rect x="58" y="876" width="17" height="17" fill="#d8d8d8"/><rect x="76" y="893" width="14" height="14" fill="#8ec8f8" stroke="none"/>
  <rect x="103" y="876" width="30" height="31" stroke="#7ab8f0"/><rect x="103" y="890" width="16" height="17"/>
  <path d="M147 908 L178 877"/><path d="M155 885 L170 900" stroke="#7ab8f0"/>
  <path d="M190 892 H197 M215 892 H222" stroke="#e8e8e8"/><path d="M197 887 L205 892 L197 897Z M215 887 L207 892 L215 897Z" fill="#80c0f8" stroke="none"/>
  <rect x="234" y="876" width="22" height="16" fill="#aaa" stroke="none"/><rect x="245" y="890" width="20" height="16"/>
  <rect x="279" y="876" width="20" height="16" fill="#6a707c"/><circle cx="295" cy="888" r="7"/><circle cx="304" cy="905" r="5" stroke="#7ab8f0"/>
 </g>
 <use href="#dd" x="176" y="908"/>
 <path d="M337 876 V896" stroke="#f5cc70" stroke-width="2.5"/><path d="M328 908 L333 894 H341 L346 908Z" fill="#f5cc70"/>
 <!-- TEXT -->
 <g font-family="Liberation Sans" fill="#e0e0e0">

  <text x="190" y="1005" font-size="34" fill="none" stroke="#e0e0e0" stroke-width="1.5">A</text>
  <text x="235" y="992" font-size="15" font-weight="bold">ABC</text>
  <text x="323" y="986" font-size="12" font-weight="bold">PDF</text>
  <text x="323" y="1032" font-size="12" font-weight="bold">PDF</text>
 </g>
 <path d="M25.9 1042 L48 986 H56 L78 1042 H69.8 L63.8 1028.1 H39.9 L34 1042Z M43.1 1019.7 H61 L51.9 998.4Z" fill="#dcdcdc" fill-rule="evenodd"/>
 <path d="M107.9 1032 L127.7 982 H135.9 L153 1024.4 L147 1028.6 L142.5 1020.2 H121 L116.1 1032Z M124.6 1011.8 H139.2 L132 994.6Z" fill="#dcdcdc" fill-rule="evenodd"/>
 <path d="M136 1045.5 C142 1038 147 1032 153 1029.7 L158 1033.5 C158 1042 148 1045.5 136 1045.5Z" fill="#d6b080"/>
 <path d="M156.5 1028 L168.5 1017 L173 1022 L161 1032.5Z" fill="#f0f0f0"/>
 <path d="M190 1010 H222" stroke="#7ab8f0" stroke-width="2"/>
 <path d="M238 996 L246 1004 L260 990" fill="none" stroke="#5fcf7f" stroke-width="4"/>
 <rect x="278" y="978" width="18" height="18" fill="#e8e8e8"/><path d="M282 983 H292 M282 988 H292 M282 993 H292" stroke="#6ab0f3" stroke-width="2"/><rect x="287" y="1000" width="24" height="7" fill="#e0e0e0"/><rect x="296" y="992" width="14" height="8" fill="#7ab8f0"/>
 <text x="297" y="992" font-family="Liberation Sans" font-size="16" font-weight="bold" fill="#7ab8f0">A</text>
 <text x="334" y="1008" font-family="Liberation Sans" font-size="22" fill="#7ab8f0">A</text><path d="M326 993 V1001 H334" fill="none" stroke="#e0e0e0" stroke-width="2"/>
 <rect x="190" y="1020" width="20" height="22" fill="#d0d0d0"/><path d="M193 1026 H207 M193 1031 H207 M193 1036 H207" stroke="#777" stroke-width="2"/><text x="197" y="1052" font-family="Liberation Sans" font-size="22" fill="none" stroke="#e0e0e0" stroke-width="1.2">A</text>
 <circle cx="244" cy="1033" r="12" fill="none" stroke="#e0e0e0" stroke-width="2"/><text x="237" y="1041" font-family="Liberation Sans" font-size="16" fill="#e0e0e0">A</text><path d="M252 1042 L262 1052" stroke="#d6aa70" stroke-width="3"/>
 <text x="278" y="1038" font-family="Liberation Sans" font-size="16" font-weight="bold" fill="#7ab8f0">A</text><rect x="278" y="1040" width="22" height="6" fill="#7ab8f0"/><rect x="278" y="1046" width="22" height="6" fill="#e0e0e0"/><path d="M296 1030 a7 7 0 1 1 12 6" fill="none" stroke="#5fcf7f" stroke-width="2.5"/>
 <path d="M326 1036 V1044 H334" fill="none" stroke="#e0e0e0" stroke-width="2"/><path d="M336 1052 L344 1036 M342 1048 L354 1036" stroke="#7ab8f0" stroke-width="2.5"/>
 <!-- DIMENSION -->
 <g fill="none" stroke="#d8d8d8" stroke-width="2.5">
  <path d="M21 1126 V1190 M83 1126 V1190 M30 1139 H74"/>
  <path d="M109 1149 V1183 M171 1149 V1183 M118 1166 H162"/>
 </g>
 <path d="M23 1139 L33 1133.5 V1144.5Z M81 1139 L71 1133.5 V1144.5Z M111 1166 L121 1160.5 V1171.5Z M169 1166 L159 1160.5 V1171.5Z" fill="#d8d8d8"/>
 <g fill="#f5cc70"><path d="M51 1157 L53.5 1170 H48.5Z"/><path d="M35 1165 L45 1172 L42 1175Z"/><path d="M68 1165 L58 1172 L61 1175Z"/><path d="M28 1182 L40 1179 V1184Z"/><path d="M76 1182 L64 1179 V1184Z"/></g>
 <path d="M136 1162 C140 1154 146 1148 152 1146 L158 1152 C156 1158 148 1162 136 1162Z" fill="#d6b080"/><path d="M154 1147 L166 1134 L171 1139 L159 1151Z" fill="#ececec"/>
 <g fill="none" stroke="#d8d8d8" stroke-width="2">
  <path d="M191 1122 V1150 M221 1122 V1150"/>
  <circle cx="249.5" cy="1136" r="14"/>
  <path d="M291 1120 V1148 M284 1151 H298"/><path d="M309 1127 V1139"/>
  <path d="M326 1124 H350 M326 1148 H350"/>
  <path d="M191 1167 V1194 M205 1167 V1194 M219 1167 V1194"/>
  <rect x="235" y="1168.5" width="30" height="23"/><path d="M249.5 1168.5 V1191.5"/>
  <path d="M279 1165 V1196 M309 1165 V1196 M284 1171 H304"/>
  <path d="M323 1176 L331 1168 M342 1196 L353 1186 M330 1172 L347 1190"/>
 </g>
 <g fill="#d8d8d8"><path d="M284 1145 L291 1152 L298 1145Z M324 1124 L330 1120.5 V1127.5Z M352 1124 L346 1120.5 V1127.5Z M324 1148 L330 1144.5 V1151.5Z M352 1148 L346 1144.5 V1151.5Z M281 1171 L287 1168 V1174Z M307 1171 L301 1168 V1174Z M328 1170 L334 1172 L330 1176Z M349 1192 L343 1190 L347 1186Z"/></g>
 <path d="M194 1131 H218" stroke="#80c0f8" stroke-width="2"/><path d="M193 1131 L199 1127.5 V1134.5Z M219 1131 L213 1127.5 V1134.5Z" fill="#80c0f8"/>
 <path d="M249.5 1131 V1141 M244.5 1136 H254.5" stroke="#80c0f8" stroke-width="2.2"/>
 <path d="M278 1133 H285 M294 1133 H302" stroke="#80c0f8" stroke-width="2.2"/><path d="M308 1133 L300 1128 V1138Z" fill="#80c0f8"/>
 <rect x="334" y="1127" width="9" height="18" fill="#f5cc70"/><path d="M334 1131 H337 M334 1135 H337 M334 1139 H337" stroke="#3b4453" stroke-width="1.2"/>
 <path d="M194 1175 H203 M207 1175 H217" stroke="#80c0f8" stroke-width="1.8"/><path d="M193 1175 L197 1172 V1178Z M203 1175 L199 1172 V1178Z M207 1175 L211 1172 V1178Z M217 1175 L213 1172 V1178Z" fill="#80c0f8"/>
 <circle cx="242" cy="1180" r="3.5" fill="none" stroke="#f0f0f0" stroke-width="2"/><path d="M242 1173 V1187 M236 1180 H248" stroke="#f0f0f0" stroke-width="1.6"/>
 <text x="251" y="1189" font-family="Liberation Sans" font-size="15" fill="#f0f0f0">.1</text>
 <path d="M287 1187 L292 1192 L301 1183" fill="none" stroke="#5fcf7f" stroke-width="3.5"/>
 <text x="339" y="1180" font-family="Liberation Sans" font-size="15" fill="#80c0f8">x</text>
 <use href="#dd" x="220" y="1151"/><use href="#dd" x="264" y="1151"/><use href="#dd" x="220" y="1195"/><use href="#dd" x="350" y="1195"/>
 <!-- LEADER -->
 <g fill="none" stroke="#d8d8d8" stroke-width="2.5">
  <circle cx="68" cy="1287" r="14"/><path d="M54 1287 H46 L24 1326"/>
  <circle cx="157" cy="1287" r="14"/><path d="M143 1287 H135 L113 1326"/>
 </g>
 <path d="M20 1332 L22 1318 L32 1324Z M109 1332 L111 1318 L121 1324Z" fill="#d8d8d8"/>
 <path d="M137 1334 C147 1334 157 1326 157 1318 L167 1318 C165 1332 151 1336 137 1334Z" fill="#d6aa70"/><path d="M157 1320 L169 1308 L175 1314 L165 1322Z" fill="#e8e8e8"/>
 <g fill="none" stroke="#d8d8d8" stroke-width="2">
  <circle cx="217" cy="1279" r="4.5"/><path d="M212.5 1281 L206 1288 M206 1288 L200 1296 M206 1288 L212 1296"/>
  <circle cx="257" cy="1268" r="4.5"/><circle cx="257" cy="1281" r="4.5"/><path d="M252.5 1269 H247 L239 1278 M252.5 1283 L242 1294"/><path d="M265.5 1264 V1296" stroke="#7ab8f0"/>
  <circle cx="302" cy="1267" r="5.5"/><path d="M297 1270 L284 1290"/>
  <circle cx="217" cy="1323" r="4.5"/><path d="M212.5 1325 L206 1332 M206 1332 L200 1340 M206 1332 L212 1340"/>
  <circle cx="259" cy="1314" r="5.5"/><circle cx="259" cy="1330" r="5.5"/><path d="M253.5 1316 H249 L239 1336"/>
 </g>
 <g fill="#d8d8d8"><path d="M198 1298 L200 1291 L204 1295Z M214 1298 L212 1291 L208 1295Z M237 1280 L238 1273 L243 1276Z M240 1296 L241 1289 L246 1292Z M282 1292 L283 1285 L288 1288Z M198 1342 L200 1335 L204 1339Z M214 1342 L212 1335 L208 1339Z M237 1338 L238 1331 L243 1334Z"/></g>
 <path d="M198 1256 V1272 M190 1264 H206" stroke="#5fcf7f" stroke-width="3.5"/>
 <path d="M192 1302 L204 1314 M204 1302 L192 1314" stroke="#e05050" stroke-width="3.5"/>
 <path d="M300 1280 L292 1290 H298 L292 1300 L306 1286 H300 L306 1280Z" fill="#f5cc70"/>
 <!-- TABLE -->
 <g fill="none" stroke="#d8d8d8" stroke-width="2.5">
  <rect x="21" y="1419" width="62" height="54"/><path d="M21 1436 H83 M21 1449 H83 M21 1461 H83 M42 1436 V1473 M62 1436 V1473"/>
  <rect x="108" y="1414" width="56" height="54"/><path d="M108 1431 H164 M108 1444 H164 M108 1456 H164 M127 1431 V1468 M146 1431 V1468"/>
 </g>
 <path d="M140 1474 C150 1474 160 1466 160 1458 L170 1458 C168 1472 154 1476 140 1474Z" fill="#d6aa70"/><path d="M160 1460 L172 1448 L178 1454 L168 1462Z" fill="#e8e8e8"/>
 <g fill="#e57840" stroke="#f2e6dc" stroke-width="2"><circle cx="86" cy="1412" r="9.5"/><circle cx="174" cy="1412" r="9.5"/></g>
 <g>
  <path d="M194 1414 H210 L218 1422 V1430 H194Z" fill="#d0d0d0"/><rect x="206" y="1426" width="16" height="14" fill="#e8e8e8"/><path d="M209 1431 H219 M209 1435 H219" stroke="#777" stroke-width="1.5"/>
  <path d="M193 1412 a3.5 4 0 0 1 7 0 v6 a3.5 4 0 0 1 -7 0Z M193 1424 a3.5 4 0 0 1 7 0 v6" fill="none" stroke="#e0a060" stroke-width="2"/>
  <path d="M238 1414 H254 L262 1422 V1436 H238Z" fill="#d0d0d0"/><path d="M258 1424 V1438 M253 1432 L258 1440 L263 1432" fill="#7ab8f0" stroke="#7ab8f0" stroke-width="3"/>
  <path d="M237 1412 a3.5 4 0 0 1 7 0 v6 a3.5 4 0 0 1 -7 0Z" fill="none" stroke="#e0a060" stroke-width="2"/>
  <rect x="190" y="1452" width="18" height="18" fill="#e8e8e8"/><path d="M194 1457 H204 M194 1462 H204 M194 1467 H204" stroke="#6ab0f3" stroke-width="2"/><rect x="198" y="1475" width="24" height="8" fill="#e0e0e0"/><rect x="210" y="1466" width="12" height="8" fill="#7ab8f0"/>
  <text x="210" y="1466" font-family="Liberation Sans" font-size="14" font-weight="bold" fill="#7ab8f0">A</text>
  <rect x="234" y="1464" width="32" height="20" fill="#d0d0d0"/><path d="M237 1452 a3.5 4 0 0 1 7 0 v6 a3.5 4 0 0 1 -7 0Z" fill="none" stroke="#e0a060" stroke-width="2"/><path d="M250 1458 a7 7 0 1 1 12 5" fill="none" stroke="#5fcf7f" stroke-width="2.5"/>
 </g>
 <!-- PARAMETRIC -->
 <path d="M23 1560 V1614" stroke="#e06a6a" stroke-width="2.5"/><rect x="19" y="1613" width="7" height="7" fill="#e06a6a"/><path d="M28 1617 H84" stroke="#e0e0e0" stroke-width="2.5"/>
 <use href="#dd" x="82" y="1628"/>
 <rect x="102" y="1567" width="12" height="10" fill="#d0d0d0"/><path d="M114 1552 V1577" stroke="#e06a6a" stroke-width="2"/><rect x="115" y="1552" width="13" height="10" fill="#8ec8f8"/><path d="M126 1570 L118 1578 H124 L118 1586 L132 1574 H126 L130 1570Z" fill="#f5cc70"/>
 <g fill="none" stroke="#e0e0e0" stroke-width="2">
  <path d="M150 1554 H146 V1580 H150 M168 1554 H172 V1568"/><path d="M154 1566 L164 1556"/>
  <path d="M106 1598 H102 V1624 H106 M124 1598 H128 V1606"/><path d="M110 1610 L120 1600"/>
  <path d="M150 1598 H146 V1624 H150 M168 1598 H172 V1606"/><path d="M154 1610 L164 1600"/>
 </g>
 <path d="M150 1566 L160 1576 M106 1610 L116 1620 M150 1610 L160 1620" stroke="#e06a6a" stroke-width="2"/>
 <circle cx="172" cy="1573" r="6" fill="#f5cc70"/><path d="M169 1580 H175 V1584 H169Z" fill="#f0f0f0"/>
 <circle cx="128" cy="1617" r="6" fill="#8ad8e0"/><path d="M128 1611 a6 6 0 0 0 0 12Z" fill="#f5cc70"/><path d="M125 1624 H131 V1628 H125Z" fill="#f0f0f0"/>
 <circle cx="172" cy="1617" r="6" fill="#8ad8e0"/><path d="M169 1624 H175 V1628 H169Z" fill="#f0f0f0"/>
 <path d="M197 1558 V1622 M259 1558 V1622 M203 1571 H253" fill="none" stroke="#e6e6e6" stroke-width="2.5"/><path d="M199 1571 L207 1566 V1576Z M257 1571 L249 1566 V1576Z" fill="#e6e6e6"/>
 <path d="M220 1598 V1591 a8.5 8.5 0 0 1 17 0 V1598" fill="none" stroke="#f5d080" stroke-width="4"/><rect x="215" y="1598" width="26" height="20" fill="#f5d080"/><rect x="227" y="1604" width="2.5" height="8" fill="#3b4453"/>
 <use href="#dd" x="262" y="1628"/>
 <g fill="none" stroke="#e6e6e6" stroke-width="2.2">
  <path d="M279 1552 V1584 M309 1552 V1584 M283 1559 H305"/>
  <path d="M322 1552 V1584 M348.8 1552 V1564.5 M326 1559 H345"/>
  <path d="M279 1596 V1628 M305 1596 V1609 M283 1603 H301"/>
  <path d="M322 1596 V1628 M348.8 1596 V1609 M326 1603 H345"/>
 </g>
 <g fill="#e6e6e6"><path d="M281 1559 L286 1555.5 V1562.5Z M307 1559 L302 1555.5 V1562.5Z M324 1559 L329 1555.5 V1562.5Z M347 1559 L342 1555.5 V1562.5Z M281 1603 L286 1599.5 V1606.5Z M303 1603 L298 1599.5 V1606.5Z M324 1603 L329 1599.5 V1606.5Z M347 1603 L342 1599.5 V1606.5Z"/></g>
 <path d="M291.5 1580 C287 1577 287 1570 292 1567.5" fill="none" stroke="#80c0f8" stroke-width="2.2"/><path d="M290 1565 L295.5 1566 L292 1570Z" fill="#80c0f8"/>
 <path d="M296.5 1567.5 C301 1570 301 1577 296 1580" fill="none" stroke="#f06a5a" stroke-width="2.2"/><path d="M298 1582 L292.5 1581 L296 1577Z" fill="#f06a5a"/>
 <circle cx="348" cy="1573" r="6" fill="#f5d080"/><path d="M344.8 1579 H351.2 V1581 a3.2 3 0 0 1 -6.4 0Z" fill="#f4f4f4"/>
 <circle cx="303.4" cy="1616.8" r="6.2" fill="#8ad8e0"/><path d="M303.4 1610.6 a6.2 6.2 0 0 0 0 12.4Z" fill="#f5d080"/><path d="M300.2 1623 H306.6 V1625 a3.2 3 0 0 1 -6.4 0Z" fill="#f4f4f4"/>
 <circle cx="348" cy="1616.8" r="6.2" fill="#8ad8e0"/><path d="M344.8 1623 H351.2 V1625 a3.2 3 0 0 1 -6.4 0Z" fill="#f4f4f4"/>
 <!-- bottom -->
 <path d="M42 1646 V1668 M31 1657 H53" stroke="#e0e0e0" stroke-width="2"/>
 <path d="M93 1648 H114 M93 1654 H114 M88 1660 H105 M93 1666 H114" stroke="#e0e0e0" stroke-width="2.5"/><path d="M106 1662 L111 1656 L116 1662Z" fill="#e0e0e0"/>
</svg>
<div class="a" id="rpanel"></div>
<div class="a" style="left:1688px;top:163px;width:3px;height:1469px;background:#262b33"></div>
<div class="a" style="left:1793px;top:163px;width:1038px;height:47px;background:#2e333e"></div>
<div class="a" style="left:2831px;top:163px;width:47px;height:47px;background:#3b4453;border-left:1px solid #2a2f39"></div>
<div class="t" style="left:2846px;top:175px;font-size:22px;color:#b0b3ba">&raquo;</div>
<svg style="left:1720px;top:170px" width="44" height="36" viewBox="1720 170 44 36">
 <path d="M1727 201 L1734 193 H1744 L1741 201Z" fill="#dcdcdc"/>
 <path d="M1727 195 L1734 187 H1753 L1748 192 H1744 L1741 195Z" fill="#dcdcdc"/>
 <path d="M1727 184 L1736 174 H1753 L1744 184Z" fill="#dcdcdc"/>
 <circle cx="1752" cy="195" r="7.5" fill="#dcdcdc"/><rect x="1751" y="193" width="2.4" height="7" fill="#2b313c"/><rect x="1751" y="190" width="2.4" height="2" fill="#2b313c"/>
</svg>
<div class="t" style="left:1711px;top:214px;font-size:24px;color:#f0f0f0">Layers</div>
<!-- layer toolbar icons -->
<svg style="left:2070px;top:210px" width="800" height="50" viewBox="2070 210 800 50">
 <g><path d="M2077 249 L2086 240 H2110 L2101 249Z" fill="#dcdcdc" stroke="#3b4453" stroke-width="1.6" stroke-linejoin="round"/><path d="M2077 243 L2086 234 H2110 L2101 243Z" fill="#dcdcdc" stroke="#3b4453" stroke-width="1.6" stroke-linejoin="round"/><path d="M2077 237 L2086 228 H2110 L2101 237Z" fill="#8ec8f8" stroke="#3b4453" stroke-width="1.6" stroke-linejoin="round"/><circle cx="2093" cy="228" r="6.5" fill="#dcdcdc" stroke="#3b4453" stroke-width="1.5"/><path d="M2125 242 L2134 233 H2158 L2149 242Z" fill="#dcdcdc" stroke="#3b4453" stroke-width="1.6" stroke-linejoin="round"/><path d="M2125 236 L2134 227 H2158 L2149 236Z" fill="#dcdcdc" stroke="#3b4453" stroke-width="1.6" stroke-linejoin="round"/><path d="M2125 230 L2134 221 H2158 L2149 230Z" fill="#dcdcdc" stroke="#3b4453" stroke-width="1.6" stroke-linejoin="round"/><path d="M2141 248 L2149 239 L2156 245 L2148 253Z" fill="#f5cc70" stroke="#3b4453" stroke-width="1.2"/><path d="M2149 239 L2153 235 L2157 238 L2160 236 L2162 240 L2156 245Z" fill="#f0f0f0"/><path d="M2177 249 L2186 240 H2210 L2201 249Z" fill="#dcdcdc" stroke="#3b4453" stroke-width="1.6" stroke-linejoin="round"/><path d="M2177 243 L2186 234 H2210 L2201 243Z" fill="#dcdcdc" stroke="#3b4453" stroke-width="1.6" stroke-linejoin="round"/><path d="M2177 237 L2186 228 H2210 L2201 237Z" fill="#dcdcdc" stroke="#3b4453" stroke-width="1.6" stroke-linejoin="round"/><path d="M2176 229 L2185 223 V227 C2192 227 2196 229 2196 234 C2193 232 2190 231 2185 231 V235Z" fill="#8ec8f8" stroke="#3b4453" stroke-width="1"/><path d="M2224 243 L2233 234 H2257 L2248 243Z" fill="#8ec8f8" stroke="#3b4453" stroke-width="1.6" stroke-linejoin="round"/><path d="M2224 237 L2233 228 H2257 L2248 237Z" fill="#dcdcdc" stroke="#3b4453" stroke-width="1.6" stroke-linejoin="round"/><path d="M2224 231 L2233 222 H2257 L2248 231Z" fill="#dcdcdc" stroke="#3b4453" stroke-width="1.6" stroke-linejoin="round"/><path d="M2250 241 L2238 252 M2237 245 V252.5 H2244.5" fill="none" stroke="#3b4453" stroke-width="5"/><path d="M2250 241 L2238 252 M2237 245 V252.5 H2244.5" fill="none" stroke="#f0f0f0" stroke-width="2.4"/><path d="M2271 243 L2280 234 H2304 L2295 243Z" fill="#8ec8f8" stroke="#3b4453" stroke-width="1.6" stroke-linejoin="round"/><path d="M2271 237 L2280 228 H2304 L2295 237Z" fill="#dcdcdc" stroke="#3b4453" stroke-width="1.6" stroke-linejoin="round"/><path d="M2271 231 L2280 222 H2304 L2295 231Z" fill="#dcdcdc" stroke="#3b4453" stroke-width="1.6" stroke-linejoin="round"/><path d="M2287 252 L2298 241 M2291 240.5 H2298.5 V248" fill="none" stroke="#3b4453" stroke-width="5"/><path d="M2287 252 L2298 241 M2291 240.5 H2298.5 V248" fill="none" stroke="#f0f0f0" stroke-width="2.4"/><path d="M2317 235 L2329 223 H2354 L2342 235Z" fill="#dcdcdc" stroke="#3b4453" stroke-width="1.6" stroke-linejoin="round"/><g stroke="#8adce8" stroke-width="2" fill="none"><path d="M2339 234 V250 M2332 238 L2346 246 M2332 246 L2346 238"/><path d="M2336 235 L2339 238 L2342 235 M2336 249 L2339 246 L2342 249"/></g><path d="M2366 235 L2378 223 H2403 L2391 235Z" fill="#dcdcdc" stroke="#3b4453" stroke-width="1.6" stroke-linejoin="round"/><circle cx="2390" cy="240" r="6.5" fill="#8ad8e0" stroke="#3b4453" stroke-width="1.2"/><path d="M2387 246 H2393 V249 a3 3 0 0 1 -6 0Z" fill="#f0f0f0"/><path d="M2414 235 L2426 223 H2451 L2439 235Z" fill="#dcdcdc" stroke="#3b4453" stroke-width="1.6" stroke-linejoin="round"/><rect x="2431" y="240" width="13" height="11" fill="#8ad8e0" stroke="#3b4453" stroke-width="1"/><path d="M2433.5 240 V236 a4 4 0 0 1 8 0 V240" fill="none" stroke="#8ad8e0" stroke-width="2.2"/><rect x="2436.6" y="243" width="1.8" height="4" fill="#3b4453"/><path d="M2462 235 L2474 223 H2499 L2487 235Z" fill="#dcdcdc" stroke="#3b4453" stroke-width="1.6" stroke-linejoin="round"/><rect x="2475" y="240" width="13" height="11" fill="#f5d080" stroke="#3b4453" stroke-width="1"/><path d="M2485 240 V236 a4 4 0 0 1 8 0 V239" fill="none" stroke="#f5d080" stroke-width="2.2"/><rect x="2480.6" y="243" width="1.8" height="4" fill="#3b4453"/></g>
 <path d="M2840 214 H2854 V242 H2840 M2846 228 H2832 M2837 223 L2832 228 L2837 233" fill="none" stroke="#dcdcdc" stroke-width="2"/>
</svg>
<!-- current layer dropdown -->
<div class="a" style="left:1709px;top:275px;width:1154px;height:52px;background:#4d576a;border:2px solid #2f3a3a;border-radius:5px"></div>
<svg style="left:1725px;top:285px" width="140" height="32" viewBox="1725 285 140 32">
 <circle cx="1738" cy="301" r="8" fill="#d8d8d8"/>
 <rect x="1766" y="298" width="14" height="13" fill="#707888"/><path d="M1769 299 V293 a4 4 0 0 1 8 0 V299" fill="none" stroke="#707888" stroke-width="2.5"/>
 <path d="M1806 292 V310 M1798 296 L1814 306 M1798 306 L1814 296" stroke="#707888" stroke-width="2.5"/>
 <rect x="1831" y="292" width="17" height="17" fill="#f39a36" stroke="#000" stroke-width="2"/>
</svg>
<div class="t" style="left:1872px;top:290px;font-size:24px;color:#f2f2f2">janelas</div>
<svg style="left:2840px;top:294px" width="18" height="12" viewBox="0 0 18 12"><path d="M1 1 H17 L9 11Z" fill="#e0e0e0"/></svg>
<div class="a" style="left:1711px;top:332px;width:1150px;height:51px;background:#4d576a;border:2px solid #2f3a3a;border-radius:5px"></div>
<div class="t" style="left:1725px;top:346px;font-size:23px;color:#f2f2f2">Unsaved Layer State</div>
<svg style="left:2840px;top:350px" width="18" height="12" viewBox="0 0 18 12"><path d="M1 1 H17 L9 11Z" fill="#e0e0e0"/></svg>
<svg style="left:1716px;top:400px" width="22" height="16" viewBox="0 0 22 16"><path d="M2 3 L11 12 L20 3" fill="none" stroke="#c8cbd0" stroke-width="2.5"/></svg>
<div class="t" style="left:1758px;top:398px;font-size:23px;color:#c8cbd0;letter-spacing:0.1px">Hide Layer List</div>
<!-- layer list -->
<div class="a" style="left:1712px;top:440px;width:1146px;height:1081px;background:#4d576a;border:1px solid #2d323d"></div>
<div class="a" style="left:1712px;top:440px;width:542px;height:47px;background:#2d323d"></div>
<div class="a" style="left:2254px;top:440px;width:604px;height:47px;background:#363636"></div>
<div class="a" style="left:1778px;top:442px;width:142px;height:44px;background:#4d576a"></div>
<div class="a" style="left:1965px;top:442px;width:2px;height:44px;background:#262a33"></div>
<div class="a" style="left:2008px;top:442px;width:2px;height:44px;background:#262a33"></div>
<div class="a" style="left:2102px;top:442px;width:2px;height:44px;background:#262a33"></div>
<div class="a" style="left:2196px;top:442px;width:2px;height:44px;background:#262a33"></div>
<svg style="left:1712px;top:440px" width="560" height="48" viewBox="1712 440 560 48">
 <path d="M1732 464 C1738 456 1750 456 1756 464 C1750 472 1738 472 1732 464Z" fill="#e0e0e0"/><circle cx="1744" cy="464" r="4.5" fill="#2d323d"/><circle cx="1744" cy="464" r="2.5" fill="#e0e0e0"/>
 <rect x="1787" y="456" width="16" height="16" fill="none" stroke="#dcdcdc" stroke-width="2"/><path d="M1787 472 L1803 456 V472Z" fill="#dcdcdc"/>
 <path d="M1896 461 L1901 455 L1906 461Z M1896 467 L1901 473 L1906 467Z" fill="#dcdcdc"/>
 <path d="M1843 486 L1848 479 L1853 486Z" fill="#3d8ef0"/>
 <path d="M1942 455 V473 M1934 459 L1950 469 M1934 469 L1950 459" stroke="#dcdcdc" stroke-width="2.5"/><circle cx="1942" cy="464" r="4" fill="none" stroke="#dcdcdc" stroke-width="2"/>
 <rect x="1979" y="462" width="14" height="12" fill="#dcdcdc"/><path d="M1982 463 V458 a4 4 0 0 1 8 0 V463" fill="none" stroke="#dcdcdc" stroke-width="2.5"/><rect x="1985" y="466" width="2" height="5" fill="#2d323d"/>
 <path d="M2045 457 H2064 M2045 464 H2064 M2045 471 H2064" stroke="#dcdcdc" stroke-width="3"/>
 <path d="M2139 457 H2158" stroke="#dcdcdc" stroke-width="1.5" stroke-dasharray="2 2"/><path d="M2139 464 H2145 M2149 464 H2158" stroke="#dcdcdc" stroke-width="2"/><path d="M2139 471 H2158" stroke="#dcdcdc" stroke-width="2.5"/>
 <rect x="2214.5" y="456.5" width="18" height="15" fill="none" stroke="#dcdcdc" stroke-width="2.2"/><rect x="2218.5" y="460.5" width="11" height="6" fill="none" stroke="#dcdcdc" stroke-width="2"/>
</svg>
<div class="t" style="left:1817px;top:453px;font-size:22px;font-weight:bold;color:#e0e0e0">Name</div>
<!-- rows -->
<div class="a" style="left:1716px;top:716px;width:1138px;height:38px;background:#8f9db0"></div>
<svg style="left:1712px;top:488px" width="480" height="330" viewBox="1712 488 480 330">
 <g fill="#d8d8d8"><circle cx="1749.6" cy="506.5" r="8"/><circle cx="1749.6" cy="544.5" r="8"/><circle cx="1749.6" cy="582.5" r="8"/><circle cx="1749.6" cy="620.5" r="8"/><circle cx="1749.6" cy="658.5" r="8"/><circle cx="1749.6" cy="696.5" r="8"/><circle cx="1749.6" cy="734.5" r="8" fill="#c8ccd4"/><circle cx="1749.6" cy="772.5" r="8"/></g>
 <g stroke="#000" stroke-width="2">
  <rect x="1777" y="498" width="17" height="17" fill="#fff"/>
  <rect x="1777" y="536" width="17" height="17" fill="#ef3d1f"/>
  <rect x="1777" y="574" width="17" height="17" fill="#fff"/>
  <rect x="1777" y="612" width="17" height="17" fill="#fff"/>
  <rect x="1777" y="650" width="17" height="17" fill="#6ff0f8"/>
  <rect x="1777" y="688" width="17" height="17" fill="#e84ff0"/>
  <rect x="1777" y="726" width="17" height="17" fill="#f39a36"/>
  <rect x="1777" y="764" width="17" height="17" fill="#6ff050"/>
 </g>
 <g stroke="#f0f0f0" stroke-width="2.5"><path d="M2118 507 H2182 M2118 545 H2182 M2118 583 H2182 M2118 621 H2182 M2118 659 H2182 M2118 697 H2182 M2118 735 H2182 M2118 773 H2182"/></g>
</svg>
<div class="a" style="left:1812px;top:495px;font-size:23px;color:#f2f2f2;line-height:38px;white-space:nowrap">
</div>
<div class="t" style="left:1813px;top:496px;font-size:23px;color:#f2f2f2">0</div>
<div class="t" style="left:1813px;top:534px;font-size:23px;color:#f2f2f2">circulo</div>
<div class="t" style="left:1813px;top:572px;font-size:23px;color:#f2f2f2">conica</div>
<div class="t" style="left:1813px;top:610px;font-size:23px;color:#f2f2f2">Defpoints</div>
<div class="t" style="left:1813px;top:648px;font-size:23px;color:#f2f2f2">elipse</div>
<div class="t" style="left:1813px;top:686px;font-size:23px;color:#f2f2f2">hiperbole</div>
<div class="t" style="left:1813px;top:724px;font-size:23px;color:#f2f2f2">janelas</div>
<div class="t" style="left:1813px;top:762px;font-size:23px;color:#f2f2f2">parabola</div>
<div class="t" style="left:2022px;top:496px;font-size:23px;color:#f2f2f2">De...</div>
<div class="t" style="left:2022px;top:534px;font-size:23px;color:#f2f2f2">De...</div>
<div class="t" style="left:2022px;top:572px;font-size:23px;color:#f2f2f2">De...</div>
<div class="t" style="left:2022px;top:610px;font-size:23px;color:#f2f2f2">De...</div>
<div class="t" style="left:2022px;top:648px;font-size:23px;color:#f2f2f2">De...</div>
<div class="t" style="left:2022px;top:686px;font-size:23px;color:#f2f2f2">De...</div>
<div class="t" style="left:2022px;top:724px;font-size:23px;color:#f2f2f2">De...</div>
<div class="t" style="left:2022px;top:762px;font-size:23px;color:#f2f2f2">De...</div>
<!-- bottom icons -->
<svg style="left:1720px;top:1528px" width="1150" height="40" viewBox="1720 1528 1150 40">
 <path d="M1729 1551 L1732 1548 M1728.5 1553.5 H1741 L1752 1542.5 M1729 1557 L1732 1554 M1728.5 1559.5 H1741 L1752 1548.5" fill="none" stroke="#a8a8a8" stroke-width="2.4"/>
 <path d="M1729.5 1547.5 L1740 1537.5 H1751 L1741 1547.5Z" fill="none" stroke="#e8e8e8" stroke-width="2.4"/>
 <path d="M1788 1551 L1791 1548 M1787.5 1553.5 H1797 M1800 1553.5 L1807 1546.5 M1788 1557 L1791 1554 M1787.5 1559.5 H1797" fill="none" stroke="#a8a8a8" stroke-width="2.4"/>
 <path d="M1788.5 1545.5 L1798 1535.5 H1807 L1797 1545.5Z" fill="none" stroke="#e8e8e8" stroke-width="2.4"/>
 <rect x="1797" y="1548" width="18" height="15" fill="#e4e4e4"/><rect x="1799.5" y="1552" width="13" height="8.5" fill="#3b4453"/><path d="M1801 1554.5 H1802.5 M1804 1554.5 H1811 M1801 1558 H1802.5 M1804 1558 H1811" stroke="#e4e4e4" stroke-width="1.6"/>
 <path d="M1847 1538 H1857 L1861 1541.5 H1867 V1544 H1854 L1848 1557Z" fill="#dedede"/><path d="M1854 1545 H1873 L1866 1558 H1849Z" fill="#dedede"/>
 <path d="M1907 1538 H1917 L1921 1541.5 H1927 V1544 H1914 L1908 1557Z" fill="#dedede"/><path d="M1914 1545 H1933 L1926 1558 H1909Z" fill="#dedede"/><path d="M1923 1546.5 L1917 1552.5 H1921 L1918.5 1557 L1925 1550.5 H1921Z" fill="#3b4453"/>
 <rect x="2762" y="1546" width="17" height="3" fill="#707888"/>
 <rect x="2810" y="1538" width="20" height="18" fill="none" stroke="#e0e0e0" stroke-width="2"/><path d="M2817 1538 V1556 M2823 1538 V1556" stroke="#e0e0e0" stroke-width="2"/><path d="M2835 1544 H2845 L2840 1550Z" fill="#e0e0e0"/>
</svg>
<div class="a" style="left:1712px;top:1574px;width:1146px;height:40px;background:#fff;border-radius:10px"></div>
<svg style="left:1720px;top:1580px" width="40" height="30" viewBox="0 0 40 30"><circle cx="11" cy="11.5" r="9.3" fill="none" stroke="#222" stroke-width="2.5"/><path d="M17.5 18 L25 25.5" stroke="#222" stroke-width="3"/><path d="M27 12 L31 16 L35 12" fill="none" stroke="#222" stroke-width="2"/></svg>
<div class="t" style="left:1767px;top:1582px;font-size:26.5px;color:#bcbcbc">Search for layer</div>
<!-- status/layout bar -->
<div class="a" style="left:368px;top:1632px;width:2510px;height:47px;background:#3b4453;border-top:2px solid #2a303a;border-bottom-right-radius:16px"></div>
<div class="a" style="left:370px;top:1634px;width:117px;height:44px;background:#4b566a"></div>
<div class="a" style="left:487px;top:1634px;width:2px;height:44px;background:#2a303a"></div>
<div class="a" style="left:534px;top:1634px;width:2px;height:44px;background:#2a303a"></div>
<div class="a" style="left:652px;top:1634px;width:2px;height:44px;background:#2a303a"></div>
<div class="a" style="left:770px;top:1634px;width:2px;height:44px;background:#2a303a"></div>
<div class="a" style="left:1924px;top:1634px;width:2px;height:44px;background:#2a303a"></div>
<div class="t" style="left:394px;top:1644px;font-size:23px;font-weight:bold;color:#eef0f4;-webkit-text-stroke:0">Model</div>
<svg style="left:500px;top:1643px" width="24" height="24" viewBox="0 0 24 24"><path d="M12 1 V23 M1 12 H23" stroke="#e0e0e0" stroke-width="2.5"/></svg>
<div class="t" style="left:568px;top:1643px;font-size:24px;color:#c0c3c8">a3rd</div>
<div class="t" style="left:686px;top:1643px;font-size:24px;color:#c0c3c8">a4rd</div>
<div class="t" style="left:1953px;top:1646px;font-size:22.6px;color:#b0b4bb">0.614, 1.670, 0.000</div>
<svg style="left:2155px;top:1634px" width="720" height="44" viewBox="2155 1634 720 44">
 <g fill="none" stroke="#dcdcdc" stroke-width="2.5">
  <path d="M2161 1646 H2191 M2161 1656 H2191 M2161 1666 H2191 M2168 1640 V1672 M2177 1640 V1672 M2186 1640 V1672" stroke-width="2"/>
  <path d="M2212 1646 H2232 M2212 1656 H2232 M2212 1666 H2232" stroke-dasharray="3 5" stroke-width="3"/>
  <path d="M2251 1640 V1672 H2283 M2251 1662 H2261 V1672" stroke-width="2"/>
  <circle cx="2305" cy="1659" r="12"/><path d="M2300 1664 L2322 1642"/>
  <path d="M2336 1646 H2346 M2341 1641 V1651"/><rect x="2346" y="1656" width="20" height="8" fill="#dcdcdc" stroke="none"/><path d="M2338 1660 H2346"/>
  <path d="M2382 1643 H2414 M2382 1653 H2414 M2382 1662 H2404" stroke-width="4"/>
  <rect x="2428" y="1641" width="28" height="28" stroke-width="2"/>
  <path d="M2474 1641 H2470 V1669 H2474 M2494 1641 H2498 V1650" stroke-width="2"/><rect x="2477" y="1645" width="8" height="7" stroke="#5fcf7f" stroke-width="2"/><circle cx="2481" cy="1661" r="4" stroke="#5fcf7f" stroke-width="2"/>
  <path d="M2514 1668 H2544 M2514 1668 L2540 1644" stroke-width="2"/>
  <rect x="2560" y="1645" width="26" height="26" stroke-width="2"/><rect x="2553" y="1638" width="9" height="9" stroke="#e8943b" stroke-width="2" fill="#3b4453"/>
 </g>
 <path d="M2494 1655 L2506 1670 L2500 1668 L2498 1674Z" fill="#fff"/>
 <g fill="#dcdcdc" stroke="none">
  <path d="M2433 1646 h4 v4 h-4z M2441 1646 h4 v4 h-4z M2449 1646 h4 v4 h-4z M2437 1650 h4 v4 h-4z M2445 1650 h4 v4 h-4z M2433 1654 h4 v4 h-4z M2441 1654 h4 v4 h-4z M2449 1654 h4 v4 h-4z M2437 1658 h4 v4 h-4z M2445 1658 h4 v4 h-4z M2433 1662 h4 v4 h-4z M2441 1662 h4 v4 h-4z M2449 1662 h4 v4 h-4z"/>
 </g>
 <rect x="2598" y="1636" width="39" height="41" fill="#5a7ab8"/>
 <path d="M2614 1640 L2622 1660 L2632 1670 L2617 1664 L2602 1672 L2610 1660Z" fill="#f0f0f0"/><circle cx="2626" cy="1648" r="5" fill="#f0f0f0"/>
 <path d="M2659 1640 L2666 1660 L2676 1670 L2661 1664 L2646 1672 L2654 1660Z" fill="#dcdcdc"/><path d="M2668 1638 L2664 1646 H2669 L2665 1654" stroke="#f5cc70" stroke-width="2" fill="none"/>
 <path d="M2704 1640 L2711 1660 L2721 1670 L2706 1664 L2691 1672 L2699 1660Z" fill="#dcdcdc"/>
 <path d="M2760 1651 H2772 L2766 1658Z" fill="#dcdcdc"/>
 <rect x="2790" y="1641" width="13" height="13" fill="none" stroke="#dcdcdc" stroke-width="2"/><circle cx="2815" cy="1651" r="6" fill="none" stroke="#dcdcdc" stroke-width="2"/><path d="M2796 1671 L2803 1659 L2810 1671Z" fill="none" stroke="#dcdcdc" stroke-width="2"/>
 <g transform="translate(2850 1657)"><circle r="10" fill="#dcdcdc"/><path d="M0 -14 V14 M-14 0 H14 M-10 -10 L10 10 M-10 10 L10 -10" stroke="#dcdcdc" stroke-width="5"/><circle r="4.5" fill="#3b4453"/></g>
</svg>
<div class="t" style="left:2726px;top:1646px;font-size:22px;color:#b0b4bb">1:1</div>
<div class="a" style="left:0;top:1679px;width:2880px;height:121px;background:linear-gradient(90deg,#433735 0%,#463835 12%,#5e4034 20%,#7a5040 27%,#6a5450 33%,#45464e 40%,#3e4248 48%,#404246 56%,#3e4642 64%,#3c4440 72%,#3a423e 85%,#384038 100%)"></div>
<div class="a" style="left:0;top:1679px;width:66px;height:121px;background:linear-gradient(45deg,#a8b4c2 0%,#98a6b6 14%,rgba(120,128,140,.6) 24%,rgba(74,58,56,0) 34%)"></div>
<div class="a" style="left:67px;top:1689px;width:2746px;height:100px;border-radius:18px;border:1px solid rgba(255,255,255,.2);background:linear-gradient(90deg,#8a7a74 0%,#8e7c76 10%,#a08070 15%,#b88a78 19%,#c6937f 22%,#c0a09a 25%,#b4aab0 28%,#aeb0b8 32%,#b2b4ba 42%,#b0b2b6 50%,#a8aaa8 54%,#9a9e98 58%,#8c928a 63%,#868e88 70%,#808a86 80%,#838b88 100%)"></div>
<svg style="left:67px;top:1689px" width="2746" height="100" viewBox="67 1689 2746 100">
 <defs>
  <linearGradient id="gBlue" x1="0" y1="0" x2="0" y2="1"><stop offset="0" stop-color="#5cc0f8"/><stop offset="1" stop-color="#2a6ee8"/></linearGradient>
  <linearGradient id="gGreen" x1="0" y1="0" x2="0" y2="1"><stop offset="0" stop-color="#6ee06a"/><stop offset="1" stop-color="#3cb83a"/></linearGradient>
  <linearGradient id="gRed" x1="0" y1="0" x2="0" y2="1"><stop offset="0" stop-color="#f46a74"/><stop offset="1" stop-color="#e8404a"/></linearGradient>
 </defs>
 <!-- Finder -->
 <rect x="82" y="1703" width="64" height="65" rx="14" fill="url(#gBlue)"/>
 <path d="M116 1703 H132 a14 14 0 0 1 14 14 V1754 a14 14 0 0 1 -14 14 H118 L114 1740 H106 C108 1726 112 1712 116 1703Z" fill="#e6e8ee"/>
 <path d="M94 1747 C104 1758 124 1758 136 1747" fill="none" stroke="#222" stroke-width="2.5"/><rect x="98" y="1724" width="3" height="7" fill="#222"/><rect x="127" y="1724" width="3" height="7" fill="#222"/>
 <!-- Stickies -->
 <rect x="164" y="1703" width="64" height="64" rx="14" fill="#e6cf6e"/><rect x="164" y="1703" width="64" height="56" rx="14" fill="#f8ec9a"/>
 <path d="M176 1728 C180 1712 184 1730 190 1720 C196 1716 200 1726 216 1726 M176 1738 H216 M176 1748 H200" stroke="#d8c070" stroke-width="3" fill="none"/>
 <!-- Launchpad -->
 <rect x="248" y="1703" width="64" height="64" rx="14" fill="#ddd8d8"/>
 <g><rect x="258" y="1713" width="12" height="12" rx="3" fill="#58d058"/><rect x="274" y="1713" width="12" height="12" rx="3" fill="#f8c030"/><rect x="290" y="1713" width="12" height="12" rx="3" fill="#f08830"/>
 <rect x="258" y="1729" width="12" height="12" rx="3" fill="#e03830"/><rect x="274" y="1729" width="12" height="12" rx="3" fill="#a0a8b0"/><rect x="290" y="1729" width="12" height="12" rx="3" fill="#f04860"/>
 <rect x="258" y="1745" width="12" height="12" rx="3" fill="#9848d8"/><rect x="274" y="1745" width="12" height="12" rx="3" fill="#3890f0"/><rect x="290" y="1745" width="12" height="12" rx="3" fill="#48c8a0"/></g>
 <!-- Messages -->
 <rect x="330" y="1703" width="64" height="64" rx="14" fill="url(#gGreen)"/><ellipse cx="362" cy="1733" rx="24" ry="19" fill="#fff"/><path d="M346 1746 L342 1756 L356 1750Z" fill="#fff"/>
 <!-- Mail -->
 <rect x="414" y="1703" width="64" height="64" rx="14" fill="url(#gBlue)"/><rect x="424" y="1721" width="44" height="30" rx="3" fill="#f4f4f4"/><path d="M424 1722 L446 1740 L468 1722" fill="none" stroke="#b0b8c8" stroke-width="2"/>
 <!-- Photos -->
 <rect x="498" y="1703" width="64" height="64" rx="14" fill="#fafafa"/>
 <g transform="translate(530 1736)"><g opacity=".85">
  <ellipse cx="0" cy="-14" rx="7" ry="13" fill="#f8a830"/><ellipse cx="0" cy="-14" rx="7" ry="13" fill="#60c850" transform="rotate(45)"/><ellipse cx="0" cy="-14" rx="7" ry="13" fill="#40b8b0" transform="rotate(90)"/><ellipse cx="0" cy="-14" rx="7" ry="13" fill="#5878e0" transform="rotate(135)"/>
  <ellipse cx="0" cy="-14" rx="7" ry="13" fill="#9860d0" transform="rotate(180)"/><ellipse cx="0" cy="-14" rx="7" ry="13" fill="#e05090" transform="rotate(225)"/><ellipse cx="0" cy="-14" rx="7" ry="13" fill="#f04848" transform="rotate(270)"/><ellipse cx="0" cy="-14" rx="7" ry="13" fill="#f87830" transform="rotate(315)"/>
 </g></g>
 <!-- FaceTime -->
 <rect x="580" y="1703" width="64" height="64" rx="14" fill="url(#gGreen)"/><rect x="590" y="1722" width="30" height="26" rx="6" fill="#f0f8f0"/><path d="M622 1735 L636 1724 V1746Z" fill="#f0f8f0"/>
 <!-- Calendar -->
 <rect x="664" y="1703" width="64" height="64" rx="14" fill="#fafafa"/><path d="M664 1717 a14 14 0 0 1 14 -14 H714 a14 14 0 0 1 14 14 V1719 H664Z" fill="#e8453c"/>
 <text x="696" y="1716" text-anchor="middle" font-family="Liberation Sans" font-weight="bold" font-size="11" fill="#fff">OUT.</text>
 <text x="696" y="1760" text-anchor="middle" font-family="Liberation Sans" font-size="38" fill="#222">16</text>
 <!-- Contacts -->
 <rect x="746" y="1703" width="64" height="64" rx="12" fill="#b08a50"/><rect x="806" y="1712" width="4" height="48" fill="#6ab0f3"/><circle cx="776" cy="1735" r="18" fill="none" stroke="#8c6a3a" stroke-width="2"/><circle cx="776" cy="1729" r="6" fill="#8c6a3a"/><path d="M764 1748 a12 10 0 0 1 24 0" fill="#8c6a3a"/>
 <!-- Reminders -->
 <rect x="830" y="1703" width="64" height="64" rx="14" fill="#fafafa"/><circle cx="842" cy="1719" r="5" fill="none" stroke="#3478f6" stroke-width="2.5"/><circle cx="842" cy="1735" r="5" fill="none" stroke="#e84040" stroke-width="2.5"/><circle cx="842" cy="1751" r="5" fill="none" stroke="#f0a030" stroke-width="2.5"/><path d="M854 1719 H882 M854 1735 H882 M854 1751 H882" stroke="#ccc" stroke-width="1.5"/>
 <!-- Notes -->
 <rect x="914" y="1703" width="64" height="64" rx="14" fill="#f6f4ee"/><path d="M914 1717 a14 14 0 0 1 14 -14 H964 a14 14 0 0 1 14 14 V1720 H914Z" fill="#f8d048"/><path d="M914 1732 H978 M914 1744 H978 M914 1756 H978" stroke="#dedad0" stroke-width="1"/>
 <!-- Freeform -->
 <rect x="996" y="1703" width="64" height="64" rx="14" fill="#fafafa"/><rect x="1018" y="1711" width="34" height="34" rx="4" fill="#5cc8f0"/><circle cx="1016" cy="1746" r="14" fill="#f06a40"/><path d="M1006 1748 C1012 1720 1022 1746 1030 1730 C1036 1722 1040 1742 1052 1728" fill="none" stroke="#1a3a8a" stroke-width="3"/>
 <!-- TV -->
 <rect x="1080" y="1703" width="64" height="64" rx="14" fill="#1c1c1e"/><path d="M1098 1727 c3 0 5 -2 5 -5 c-3 0 -5 2 -5 5z M1104 1745 c-2 1 -3 1 -5 0 c-2 0 -3 1 -5 0 c-3 -2 -5 -8 -3 -12 c1 -2 3 -3 5 -3 c1 0 3 1 4 1 c1 0 2 -1 4 -1 c2 0 3 1 4 2 c-3 2 -3 7 1 8 c-1 2 -2 4 -4 5z" fill="#fff"/><text x="1109" y="1745" font-family="Liberation Sans" font-weight="bold" font-size="25" fill="#fff">tv</text>
 <!-- Safari -->
 <rect x="1162" y="1703" width="64" height="64" rx="14" fill="#f4f4f4"/><circle cx="1194" cy="1735" r="27" fill="#3a8ef0"/><circle cx="1194" cy="1735" r="22" fill="none" stroke="#d8eafc" stroke-width="3" stroke-dasharray="0.8 2.6"/><path d="M1175 1754 L1190 1731 L1198 1739Z" fill="#f4f4f4"/><path d="M1213 1716 L1190 1731 L1198 1739Z" fill="#f04040"/>
 <!-- App Store -->
 <rect x="1246" y="1703" width="64" height="64" rx="14" fill="url(#gBlue)"/><path d="M1266 1755 L1282 1718 M1298 1755 L1278 1718 M1260 1745 H1306" stroke="#fff" stroke-width="4.5" stroke-linecap="round"/>
 <!-- Music -->
 <rect x="1330" y="1703" width="64" height="64" rx="14" fill="url(#gRed)"/><path d="M1354 1752 V1720 L1378 1714 V1746" fill="none" stroke="#fff" stroke-width="4"/><circle cx="1349" cy="1752" r="6" fill="#fff"/><circle cx="1373" cy="1746" r="6" fill="#fff"/>
 <!-- TextEdit -->
 <rect x="1412" y="1703" width="64" height="64" rx="14" fill="#faf6ec"/><path d="M1420 1728 H1468 M1420 1738 H1468 M1420 1748 H1468 M1420 1758 H1468" stroke="#f0d8b0" stroke-width="1"/><text x="1418" y="1730" font-family="Liberation Serif" font-weight="bold" font-size="30" fill="#f0a040">&#8220;</text><path d="M1446 1760 L1466 1712" stroke="#e89a20" stroke-width="5"/><path d="M1444 1764 L1448 1754" stroke="#333" stroke-width="2"/>
 <!-- Settings -->
 <rect x="1496" y="1703" width="64" height="64" rx="14" fill="#8e9196"/><circle cx="1528" cy="1735" r="27" fill="#4a4c50"/><circle cx="1528" cy="1735" r="24" fill="none" stroke="#9a9ca0" stroke-width="3" stroke-dasharray="2 2.5"/><circle cx="1528" cy="1735" r="19" fill="#7a7c80"/><circle cx="1528" cy="1735" r="15" fill="#505256"/><circle cx="1528" cy="1735" r="5" fill="#8a8c90"/><path d="M1528 1735 V1721 M1528 1735 L1540 1742 M1528 1735 L1516 1742" stroke="#8a8c90" stroke-width="4"/>
 <!-- Spotify -->
 <circle cx="1610" cy="1735" r="32" fill="#5ed070"/><path d="M1590 1724 C1604 1718 1620 1720 1632 1727 M1592 1736 C1604 1731 1618 1732 1628 1738 M1594 1747 C1604 1743 1616 1744 1624 1748" fill="none" stroke="#111" stroke-width="4.5" stroke-linecap="round"/>
 <!-- Chrome -->
 <rect x="1662" y="1703" width="64" height="64" rx="14" fill="#fafafa"/><circle cx="1694" cy="1735" r="26" fill="#e04838"/><path d="M1694 1735 L1671 1748 A26 26 0 0 0 1707 1758Z" fill="#38a850"/><path d="M1694 1735 L1707 1758 A26 26 0 0 0 1720 1735 H1694Z" fill="#f8c830"/><path d="M1694 1735 L1671 1748 A26 26 0 0 1 1671 1722Z" fill="#38a850"/><circle cx="1694" cy="1735" r="11" fill="#fff"/><circle cx="1694" cy="1735" r="8.5" fill="#3a78e8"/>
 <!-- WhatsApp -->
 <rect x="1746" y="1703" width="64" height="64" rx="14" fill="url(#gGreen)"/><circle cx="1778" cy="1734" r="21" fill="none" stroke="#fff" stroke-width="4"/><path d="M1760 1754 L1758 1760 L1766 1752Z" fill="#fff"/><path d="M1770 1726 C1772 1738 1778 1744 1788 1744" stroke="#fff" stroke-width="5" fill="none" stroke-linecap="round"/>
 <!-- separator -->
 <rect x="1838" y="1712" width="2" height="66" fill="#5a5a5a"/>
 <!-- AutoCAD -->
 <rect x="1866" y="1703" width="64" height="64" rx="14" fill="#fafafa"/><path d="M1874 1712 H1922 V1758 H1880 L1874 1752Z" fill="#c8283a"/><path d="M1874 1712 H1882 V1744 L1874 1752Z" fill="#e84a5a"/><rect x="1880" y="1744" width="42" height="14" fill="#8a1828"/>
 <text x="1901" y="1740" text-anchor="middle" font-family="Liberation Sans" font-weight="bold" font-size="26" fill="#fff">A</text><text x="1901" y="1756" text-anchor="middle" font-family="Liberation Sans" font-weight="bold" font-size="11" fill="#fff">CAD</text>
 <!-- Sublime -->
 <rect x="1950" y="1703" width="64" height="64" rx="14" fill="#454545"/><path d="M1966 1726 L1998 1714 V1726 L1966 1738Z M1966 1744 L1998 1732 V1744 L1966 1756Z M1966 1738 L1998 1744" fill="#f8a030"/>
 <!-- WhatsApp 2 -->
 <rect x="2032" y="1703" width="64" height="64" rx="14" fill="#c8c8c8"/><circle cx="2064" cy="1734" r="21" fill="none" stroke="#fff" stroke-width="4"/><path d="M2046 1754 L2044 1760 L2052 1752Z" fill="#fff"/><path d="M2056 1726 C2058 1738 2064 1744 2074 1744" stroke="#fff" stroke-width="5" fill="none" stroke-linecap="round"/>
 <!-- OpenVPN -->
 <circle cx="2148" cy="1735" r="34" fill="#fafafa"/><circle cx="2148" cy="1735" r="23" fill="none" stroke="#f08a30" stroke-width="10"/><path d="M2148 1758 V1740" stroke="#fafafa" stroke-width="14"/><circle cx="2148" cy="1734" r="8" fill="#1a3060"/><path d="M2143 1738 L2140 1760 H2156 L2153 1738Z" fill="#1a3060"/>
 <!-- Preview -->
 <rect x="2198" y="1703" width="64" height="64" rx="14" fill="#e8eef4"/><rect x="2204" y="1709" width="52" height="52" rx="8" fill="#78a8e0"/><rect x="2204" y="1740" width="52" height="21" fill="#3a5a7a"/><path d="M2230 1746 H2262 V1768 H2230Z" fill="#ccd" opacity=".9"/><rect x="2232" y="1736" width="28" height="10" rx="4" fill="#111"/>
 <!-- QGIS -->
 <circle cx="2308" cy="1733" r="27" fill="none" stroke="#80b030" stroke-width="11"/><path d="M2298 1730 L2308 1724 L2340 1760 L2330 1766Z" fill="#90c048"/><path d="M2298 1730 L2308 1724 L2314 1738 L2304 1744Z" fill="#f08a30"/><rect x="2314" y="1752" width="22" height="16" fill="#838b88"/><path d="M2316 1748 L2330 1760 L2338 1766 L2326 1754Z" fill="#90c048"/>
 <!-- separator -->
 <rect x="2374" y="1712" width="2" height="66" fill="#555a58"/>
 <!-- thumbnails -->
 <rect x="2396" y="1712" width="76" height="47" fill="#f8f8f8"/><rect x="2396" y="1712" width="76" height="4" fill="#ddd"/><rect x="2398" y="1718" width="12" height="30" fill="#d8e0e8"/><circle cx="2458" cy="1760" r="12" fill="none" stroke="#80b030" stroke-width="5"/><path d="M2454 1758 L2466 1770" stroke="#f08a30" stroke-width="4"/>
 <rect x="2480" y="1711" width="75" height="48" fill="#f8f8f8"/><rect x="2480" y="1711" width="75" height="9" fill="#e4dcee"/><rect x="2480" y="1720" width="72" height="3" fill="#3a3a3a"/><path d="M2506 1728 V1744 H2537" fill="none" stroke="#555" stroke-width="0.8"/><rect x="2506" y="1736" width="22" height="8" fill="#f4d8c8" stroke="#b08070" stroke-width="1"/><rect x="2511" y="1740" width="12" height="4" fill="#fff"/><rect x="2480" y="1756" width="75" height="3" fill="#8a7a9a"/><rect x="2532" y="1749" width="23" height="22" rx="4" fill="#e8eef4"/><rect x="2535" y="1751" width="17" height="11" fill="#78a8e0"/><rect x="2541" y="1761" width="12" height="9" rx="3" fill="#222"/>
 <rect x="2564" y="1712" width="75" height="47" fill="#2a2a2a"/><rect x="2564" y="1712" width="75" height="5" fill="#e4dcee"/><rect x="2580" y="1721" width="54" height="38" fill="#f4eedc"/><path d="M2584 1726 H2620 M2584 1732 H2620 M2584 1738 H2612" stroke="#888" stroke-width="1"/><circle cx="2627" cy="1758" r="11" fill="#fafafa"/><circle cx="2627" cy="1758" r="8" fill="#e04838"/><circle cx="2627" cy="1758" r="4" fill="#3a78e8"/>
 <rect x="2647" y="1707" width="74" height="53" fill="#2a3240"/><rect x="2647" y="1707" width="74" height="3" fill="#e0e0e0"/><path d="M2656 1722 H2690 M2656 1730 H2700 M2656 1738 H2680 M2656 1746 H2696" stroke="#6a7a90" stroke-width="1"/><rect x="2697" y="1743" width="24" height="24" rx="5" fill="#454545"/><path d="M2703 1750 L2715 1746 V1752 L2703 1756Z M2703 1758 L2715 1754 V1760 L2703 1764Z" fill="#f8a030"/>
 <!-- Trash -->
 <path d="M2742 1708 H2796 L2788 1770 a6 6 0 0 1 -6 4 H2756 a6 6 0 0 1 -6 -4Z" fill="#e8eaec"/><ellipse cx="2769" cy="1709" rx="27" ry="6" fill="#d0d4d8"/><path d="M2748 1706 L2760 1696 L2772 1704 L2784 1697 L2792 1707Z" fill="#c0c4c8"/><path d="M2760 1700 L2768 1706 M2776 1700 L2782 1708" stroke="#3a78e8" stroke-width="3"/>
 <!-- badges -->
 <g fill="#e8453c"><circle cx="555" cy="1711" r="12"/><circle cx="638" cy="1711" r="12"/><circle cx="887" cy="1711" r="12"/></g>
 <g font-family="Liberation Sans" font-size="16" fill="#fff" text-anchor="middle"><text x="555" y="1717">1</text><text x="638" y="1717">3</text><text x="887" y="1717">1</text></g>
 <!-- dots -->
 <g fill="#111"><circle cx="114" cy="1782" r="3.5"/><circle cx="196" cy="1782" r="3.5"/><circle cx="362" cy="1782" r="3.5"/><circle cx="446" cy="1782" r="3.5"/>
 <circle cx="946" cy="1782" r="3.5" fill="#333"/><circle cx="1112" cy="1782" r="3.5" fill="#333"/><circle cx="1362" cy="1782" r="3.5" fill="#333"/>
 <circle cx="1610" cy="1782" r="3.5"/><circle cx="1694" cy="1782" r="3.5"/><circle cx="1778" cy="1782" r="3.5"/><circle cx="1898" cy="1782" r="3.5"/><circle cx="1981" cy="1782" r="3.5"/><circle cx="2064" cy="1782" r="3.5"/><circle cx="2148" cy="1782" r="3.5"/><circle cx="2230" cy="1782" r="3.5"/><circle cx="2313" cy="1782" r="3.5"/></g>
</svg>
</body></html>
